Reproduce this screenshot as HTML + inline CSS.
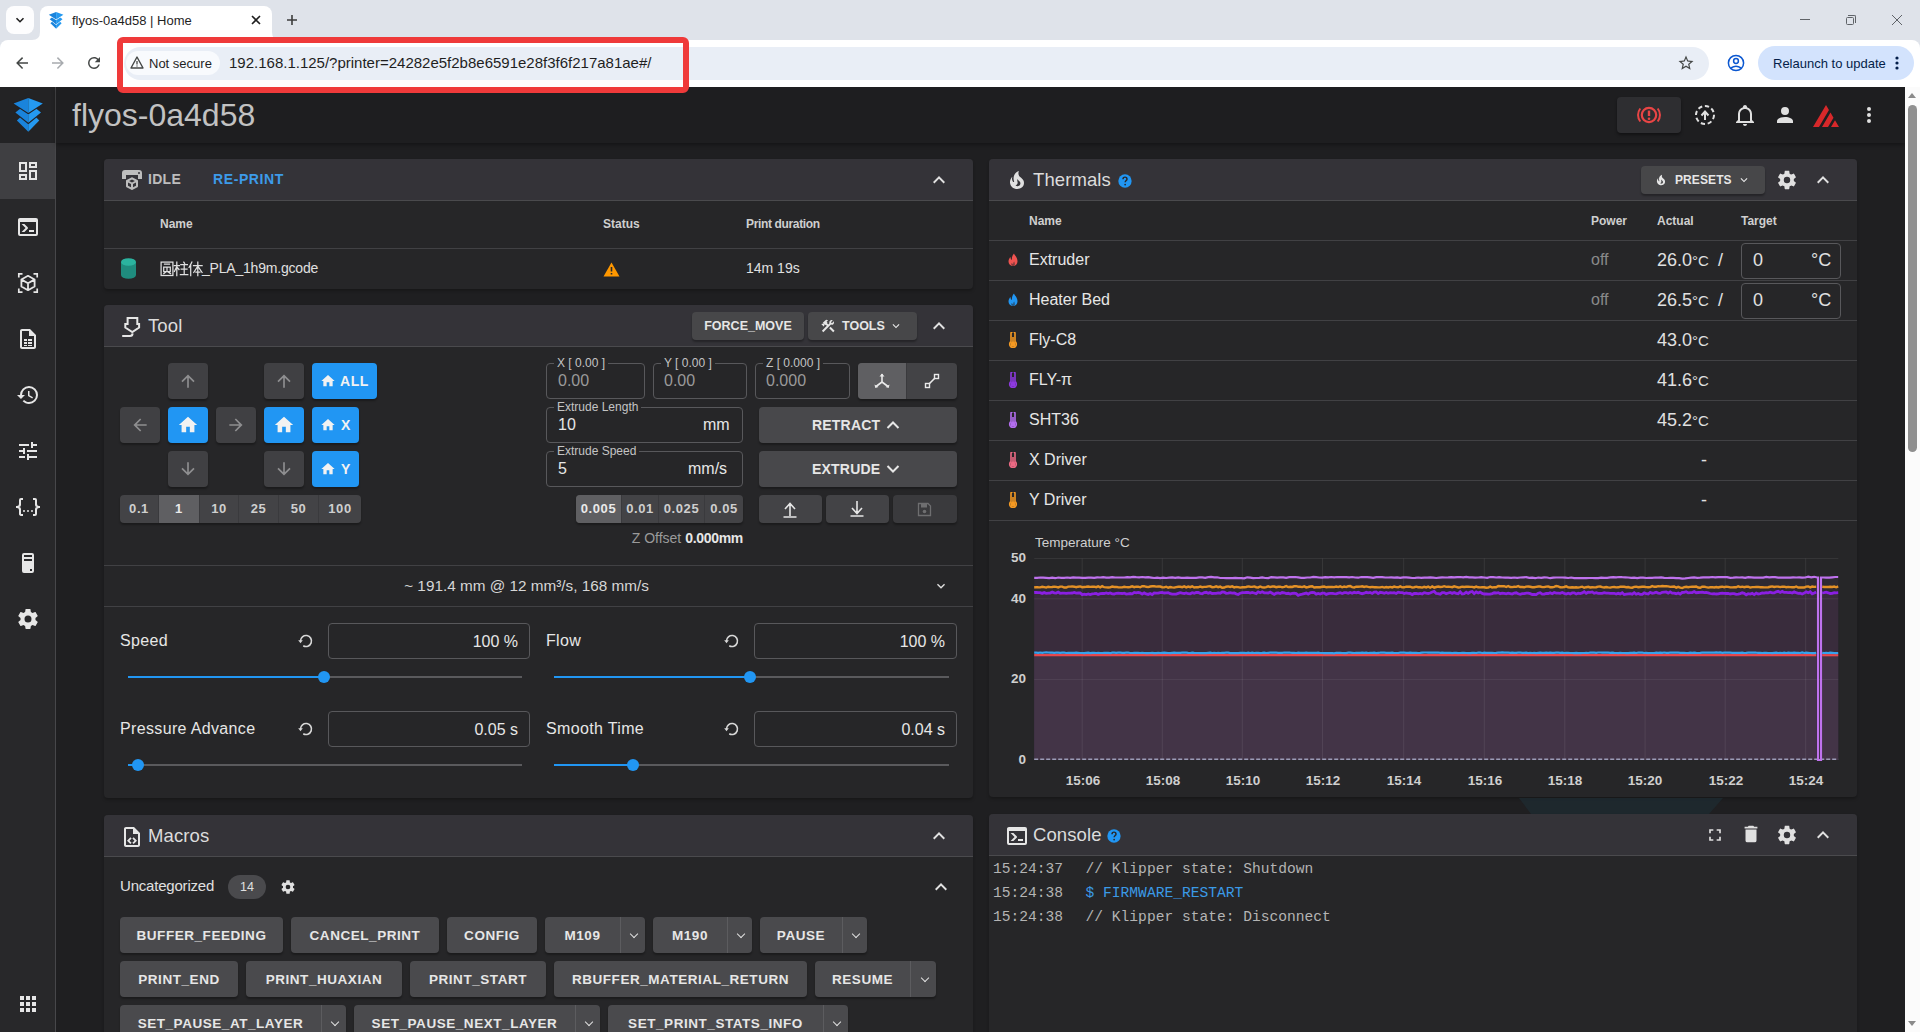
<!DOCTYPE html>
<html><head><meta charset="utf-8">
<style>
*{box-sizing:border-box;margin:0;padding:0}
html,body{width:1920px;height:1032px;overflow:hidden;background:#dfe3ea;font-family:"Liberation Sans",sans-serif}
.a{position:absolute}
svg{display:block}
/* chrome */
#tabbar{left:0;top:0;width:1920px;height:40px;background:#dfe3ea}
#toolbar{left:0;top:40px;width:1920px;height:47px;background:#fff;border-radius:8px 8px 0 0}
.ctext{color:#1f1f1f;white-space:nowrap}
/* app */
#app{left:0;top:87px;width:1905px;height:945px;background:#1f1f21;overflow:hidden}
#sidebar{left:0;top:0;width:56px;height:945px;background:#28282a;border-right:1px solid #47474a}
#appbar{left:56px;top:0;width:1849px;height:56px;background:#1e1e20;box-shadow:0 2px 4px rgba(0,0,0,.35)}
.panel{position:absolute;background:#262628;border-radius:4px;overflow:hidden;box-shadow:0 2px 3px rgba(0,0,0,.25)}
.ph{position:absolute;left:0;top:0;right:0;height:42px;background:#343338;border-bottom:1px solid #4a4a4d}
.t{position:absolute;white-space:nowrap;color:#e0e0e0}
.btn{position:absolute;background:#434346;border-radius:4px;color:#e6e6e6;font-weight:bold;font-size:14px;letter-spacing:1.1px;text-align:center;box-shadow:0 2px 2px rgba(0,0,0,.3)}
.fld{position:absolute;border:1px solid #58585b;border-radius:4px}
.mv{width:40px;height:36px;background:#404043}
.blue{background:#2196f3 !important}
.seg{position:absolute;height:28px;border-radius:4px;overflow:hidden;background:#434346;display:flex;box-shadow:0 2px 2px rgba(0,0,0,.3)}
.seg span{display:block;height:28px;line-height:28px;text-align:center;font-size:13px;font-weight:bold;color:#cfcfcf;letter-spacing:0.6px;border-right:1px solid #3a3a3d}
.seg span:last-child{border-right:none}
.seg span.on{background:#5f5f62;color:#eaeaea}
.lbl{position:absolute;white-space:nowrap;font-size:12px;margin-left:-2px;line-height:12px;color:#c4c4c4;background:#262628;padding:0 3px}
.fv{font-size:16px;line-height:20px}
.sl{font-size:16px;line-height:20px;color:#e6e6e6;letter-spacing:0.35px;margin-top:1px}
.inp span{position:absolute;right:11px;top:8px;font-size:16px;line-height:20px;color:#e6e6e6;white-space:nowrap}
.trk{position:absolute;height:2px;background:#5a5a5d}
.trk i{display:block;height:2px;background:#2196f3}
.thumb{position:absolute;width:12px;height:12px;border-radius:6px;background:#2196f3}
.mb{position:absolute;height:36px;line-height:37px;background:#4a4a4d;border-radius:4px;color:#e6e6e6;font-weight:bold;font-size:13.5px;letter-spacing:0.55px;text-align:center;white-space:nowrap;box-shadow:0 2px 2px rgba(0,0,0,.3)}
.mb.sp{text-align:left}
.mb.sp span{display:inline-block;text-align:center;border-right:1px solid #5c5c5f;height:36px}
.mb.sp::after{content:"";position:absolute;right:8px;top:14px;width:5px;height:5px;border-right:1.6px solid #e0e0e0;border-bottom:1.6px solid #e0e0e0;transform:rotate(45deg)}
.th{font-size:12px;line-height:14px;font-weight:bold;color:#cfcfcf}
.hl{position:absolute;left:0;width:868px;height:1px;background:#414144}
.tn{font-size:16px;line-height:20px;color:#e6e6e6}
.tp{font-size:16px;line-height:20px;color:#8a8a8a}
.ta{font-size:18px;line-height:20px;color:#e0e0e0}
.ta small{font-size:15px}
.yl{left:0;width:37px;text-align:right;font-size:13.5px;line-height:16px;color:#cfcfcf;font-weight:bold}
.xl{top:614px;width:48px;text-align:center;font-size:13.5px;line-height:16px;color:#cfcfcf;font-weight:bold}
.cl{left:4px;margin-top:1px;font-family:"Liberation Mono",monospace;font-size:14.6px;line-height:20px;color:#b4b4b4;white-space:pre}
#sb{left:1905px;top:87px;width:15px;height:945px;background:#fbfbfb}
</style></head>
<body>
<!-- ============ CHROME ============ -->
<div id="tabbar" class="a"></div>
<div class="a" style="left:6px;top:6px;width:28px;height:28px;border-radius:8px;background:#fdfdfe"></div>
<svg class="a" style="left:14px;top:14px" width="12" height="12" viewBox="0 0 12 12"><path d="M2.5 4.2 L6 7.7 L9.5 4.2" fill="none" stroke="#1f1f1f" stroke-width="1.6"/></svg>
<!-- active tab -->
<div class="a" style="left:40px;top:6px;width:232px;height:35px;background:#fff;border-radius:8px 8px 0 0"></div>
<svg class="a" style="left:32px;top:32px" width="8" height="8"><path d="M0 8 Q8 8 8 0 L8 8Z" fill="#fff"/></svg>
<svg class="a" style="left:272px;top:32px" width="8" height="8"><path d="M0 0 Q0 8 8 8 L0 8Z" fill="#fff"/></svg>
<svg class="a" style="left:46px;top:9px" width="20" height="23" viewBox="0 0 40 46"><path d="M20.3 17.5 L20.3 39.7 L8.9 28.6Z" fill="#1a84dc"/><path d="M20.3 17.5 L31.25 28.6 L20.3 39.7Z" fill="#2499f0"/><path d="M20.3 10.2 L33 20.5 L20.3 30.8 L7.4 20.5Z" fill="#fff" stroke="#fff" stroke-width="2.2" stroke-linejoin="round"/><path d="M20.3 10.2 L20.3 30.8 L7.4 20.5Z" fill="#1a84dc"/><path d="M20.3 10.2 L33 20.5 L20.3 30.8Z" fill="#2499f0"/><path d="M20.3 6 L34.8 11.4 L20.3 21 L5.6 11.4Z" fill="#fff" stroke="#fff" stroke-width="2.2" stroke-linejoin="round"/><path d="M20.3 6 L20.3 21 L5.6 11.4Z" fill="#1a84dc"/><path d="M20.3 6 L34.8 11.4 L20.3 21Z" fill="#2499f0"/></svg>
<div class="a ctext" style="left:72px;top:13px;font-size:13px;line-height:16px">flyos-0a4d58 | Home</div>
<svg class="a" style="left:251px;top:15px" width="10" height="10"><path d="M1 1L9 9M9 1L1 9" stroke="#1f1f1f" stroke-width="1.6"/></svg>
<svg class="a" style="left:286px;top:14px" width="12" height="12"><path d="M6 1V11M1 6H11" stroke="#3c3c3c" stroke-width="1.6"/></svg>
<!-- window controls -->
<div class="a" style="left:1800px;top:19px;width:10px;height:1px;background:#5f6368"></div>
<div class="a" style="left:1846px;top:17px;width:8px;height:8px;border:1px solid #5f6368;border-radius:1.5px"></div>
<div class="a" style="left:1848px;top:15px;width:8px;height:8px;border-top:1px solid #5f6368;border-right:1px solid #5f6368;border-radius:0 2px 0 0"></div>
<svg class="a" style="left:1891px;top:14px" width="12" height="12"><path d="M1 1L11 11M11 1L1 11" stroke="#5f6368" stroke-width="1"/></svg>

<div id="toolbar" class="a"></div>
<svg class="a" style="left:13px;top:54px" width="18" height="18" viewBox="0 0 24 24"><path d="M20,11V13H8L13.5,18.5L12.08,19.92L4.16,12L12.08,4.08L13.5,5.5L8,11H20Z" fill="#444746"/></svg>
<svg class="a" style="left:49px;top:54px" width="18" height="18" viewBox="0 0 24 24"><path d="M4,11V13H16L10.5,18.5L11.92,19.92L19.84,12L11.92,4.08L10.5,5.5L16,11H4Z" fill="#a8abaf"/></svg>
<svg class="a" style="left:85px;top:54px" width="18" height="18" viewBox="0 0 24 24"><path d="M17.65,6.35C16.2,4.9 14.21,4 12,4A8,8 0 0,0 4,12A8,8 0 0,0 12,20C15.73,20 18.84,17.45 19.73,14H17.65C16.83,16.33 14.61,18 12,18A6,6 0 0,1 6,12A6,6 0 0,1 12,6C13.66,6 15.14,6.69 16.22,7.78L13,11H20V4L17.65,6.35Z" fill="#444746"/></svg>
<div class="a" style="left:124px;top:47px;width:1585px;height:33px;border-radius:17px;background:#e9eef6"></div>
<div class="a" style="left:126px;top:51px;width:94px;height:24px;border-radius:12px;background:#f8fafd"></div>
<svg class="a" style="left:130px;top:56px" width="14" height="13" viewBox="0 0 14 13"><path d="M7 1 L13 12 L1 12Z" fill="none" stroke="#444746" stroke-width="1.4" stroke-linejoin="round"/><path d="M7 5V8.5M7 9.6V10.6" stroke="#444746" stroke-width="1.3"/></svg>
<div class="a ctext" style="left:149px;top:56px;font-size:13px;line-height:16px">Not secure</div>
<div class="a ctext" style="left:229px;top:54px;font-size:15px;line-height:18px">192.168.1.125/?printer=24282e5f2b8e6591e28f3f6f217a81ae#/</div>
<svg class="a" style="left:1677px;top:54px" width="18" height="18" viewBox="0 0 24 24"><path d="M12,15.39L8.24,17.66L9.23,13.38L5.91,10.5L10.29,10.13L12,6.09L13.71,10.13L18.09,10.5L14.77,13.38L15.76,17.66M22,9.24L14.81,8.63L12,2L9.19,8.63L2,9.24L7.45,13.97L5.82,21L12,17.27L18.18,21L16.54,13.97L22,9.24Z" fill="#444746"/></svg>
<svg class="a" style="left:1727px;top:54px" width="18" height="18" viewBox="0 0 18 18"><circle cx="9" cy="9" r="7.6" fill="none" stroke="#0b57d0" stroke-width="1.5"/><circle cx="9" cy="7" r="2.4" fill="none" stroke="#0b57d0" stroke-width="1.5"/><path d="M4 13.8 Q9 10.5 14 13.8" fill="none" stroke="#0b57d0" stroke-width="1.5"/></svg>
<div class="a" style="left:1758px;top:46px;width:156px;height:34px;border-radius:17px;background:#d3e3fd"></div>
<div class="a ctext" style="left:1773px;top:56px;font-size:13px;line-height:16px;color:#041e49">Relaunch to update</div>
<svg class="a" style="left:1893px;top:55px" width="8" height="16"><circle cx="4" cy="3" r="1.6" fill="#041e49"/><circle cx="4" cy="8" r="1.6" fill="#041e49"/><circle cx="4" cy="13" r="1.6" fill="#041e49"/></svg>

<!-- ============ APP ============ -->
<div id="app" class="a">
  <div id="sidebar" class="a"></div>
  <div class="a" style="left:0;top:0;width:55px;height:56px;background:#232325"></div>
  <div class="a" style="left:0;top:56px;width:55px;height:56px;background:#3f3f42"></div>
  <!-- logo --><svg class="a" style="left:8px;top:5px" width="40" height="46" viewBox="0 0 40 46"><path d="M20.3 17.5 L20.3 39.7 L8.9 28.6Z" fill="#1a84dc"/><path d="M20.3 17.5 L31.25 28.6 L20.3 39.7Z" fill="#2499f0"/><path d="M20.3 10.2 L33 20.5 L20.3 30.8 L7.4 20.5Z" fill="#222225" stroke="#222225" stroke-width="2.2" stroke-linejoin="round"/><path d="M20.3 10.2 L20.3 30.8 L7.4 20.5Z" fill="#1a84dc"/><path d="M20.3 10.2 L33 20.5 L20.3 30.8Z" fill="#2499f0"/><path d="M20.3 6 L34.8 11.4 L20.3 21 L5.6 11.4Z" fill="#222225" stroke="#222225" stroke-width="2.2" stroke-linejoin="round"/><path d="M20.3 6 L20.3 21 L5.6 11.4Z" fill="#1a84dc"/><path d="M20.3 6 L34.8 11.4 L20.3 21Z" fill="#2499f0"/></svg>
  <!-- sidebar icons -->
  <svg class="a" style="left:16px;top:72px" width="24" height="24" viewBox="0 0 24 24"><path d="M19,5V7H15V5H19M9,5V11H5V5H9M19,13V19H15V13H19M9,17V19H5V17H9M21,3H13V9H21V3M11,3H3V13H11V3M21,11H13V21H21V11M11,15H3V21H11V15Z" fill="#e6e6e6"/></svg>
  <svg class="a" style="left:16px;top:128px" width="24" height="24" viewBox="0 0 24 24"><path d="M20,19V7H4V19H20M20,3A2,2 0 0,1 22,5V19A2,2 0 0,1 20,21H4A2,2 0 0,1 2,19V5C2,3.89 2.9,3 4,3H20M13,17V15H18V17H13M9.58,13L5.57,9H8.4L11.7,12.3C12.09,12.69 12.09,13.33 11.7,13.72L8.42,17H5.59L9.58,13Z" fill="#e6e6e6"/></svg>
  <svg class="a" style="left:16px;top:184px" width="24" height="24" viewBox="0 0 24 24"><path d="M2.8 6.5V2.8H6.5M17.5 2.8H21.2V6.5M21.2 17.5V21.2H17.5M6.5 21.2H2.8V17.5" fill="none" stroke="#e6e6e6" stroke-width="1.7"/><path d="M12 4.8L18.6 8.5V15.5L12 19.2L5.4 15.5V8.5Z M5.6 8.6L12 12.2L18.4 8.6 M12 12.2V19" fill="none" stroke="#e6e6e6" stroke-width="1.8" stroke-linejoin="round"/></svg>
  <svg class="a" style="left:16px;top:240px" width="24" height="24" viewBox="0 0 24 24"><path d="M14 2H6C4.9 2 4 2.9 4 4V20C4 21.1 4.9 22 6 22H18C19.1 22 20 21.1 20 20V8L14 2M18 20H6V4H13V9H18V20M8 12H11V14H8V12M12 12H16V14H12V12M8 15H11V17H8V15M12 15H16V17H12V15M8 18H11V19H8V18M12 18H16V19H12V18Z" fill="#e6e6e6"/></svg>
  <svg class="a" style="left:16px;top:296px" width="24" height="24" viewBox="0 0 24 24"><path d="M13.5,8H12V13L16.28,15.54L17,14.33L13.5,12.25V8M13,3A9,9 0 0,0 4,12H1L4.96,16.03L9,12H6A7,7 0 0,1 13,5A7,7 0 0,1 20,12A7,7 0 0,1 13,19C11.07,19 9.32,18.21 8.06,16.94L6.64,18.36C8.27,20 10.5,21 13,21A9,9 0 0,0 22,12A9,9 0 0,0 13,3" fill="#e6e6e6"/></svg>
  <svg class="a" style="left:16px;top:352px" width="24" height="24" viewBox="0 0 24 24"><path d="M3,17V19H9V17H3M3,5V7H13V5H3M13,21V19H21V17H13V15H11V21H13M7,9V11H3V13H7V15H9V9H7M21,13V11H11V13H21M15,9H17V7H21V5H17V3H15V9Z" fill="#e6e6e6"/></svg>
  <svg class="a" style="left:16px;top:408px" width="24" height="24" viewBox="0 0 24 24"><path d="M5,3H7V5H5V10A2,2 0 0,1 3,12A2,2 0 0,1 5,14V19H7V21H5C3.93,20.73 3,20.1 3,19V15A2,2 0 0,0 1,13H0V11H1A2,2 0 0,0 3,9V5A2,2 0 0,1 5,3M19,3A2,2 0 0,1 21,5V9A2,2 0 0,0 23,11H24V13H23A2,2 0 0,0 21,15V19A2,2 0 0,1 19,21H17V19H19V14A2,2 0 0,1 21,12A2,2 0 0,1 19,10V5H17V3H19M12,15A1,1 0 0,1 13,16A1,1 0 0,1 12,17A1,1 0 0,1 11,16A1,1 0 0,1 12,15M8,15A1,1 0 0,1 9,16A1,1 0 0,1 8,17A1,1 0 0,1 7,16A1,1 0 0,1 8,15M16,15A1,1 0 0,1 17,16A1,1 0 0,1 16,17A1,1 0 0,1 15,16A1,1 0 0,1 16,15Z" fill="#e6e6e6"/></svg>
  <svg class="a" style="left:16px;top:464px" width="24" height="24" viewBox="0 0 24 24"><path d="M8,2H16A2,2 0 0,1 18,4V20A2,2 0 0,1 16,22H8A2,2 0 0,1 6,20V4A2,2 0 0,1 8,2M8,4V6H16V4H8M16,8H8V10H16V8M16,18H14V20H16V18Z" fill="#e6e6e6"/></svg>
  <svg class="a" style="left:16px;top:520px" width="24" height="24" viewBox="0 0 24 24"><path d="M12,15.5A3.5,3.5 0 0,1 8.5,12A3.5,3.5 0 0,1 12,8.5A3.5,3.5 0 0,1 15.5,12A3.5,3.5 0 0,1 12,15.5M19.43,12.97C19.47,12.65 19.5,12.33 19.5,12C19.5,11.67 19.47,11.34 19.43,11L21.54,9.37C21.73,9.22 21.78,8.95 21.66,8.73L19.66,5.27C19.54,5.05 19.27,4.96 19.05,5.05L16.56,6.05C16.04,5.66 15.5,5.32 14.87,5.07L14.5,2.42C14.46,2.18 14.25,2 14,2H10C9.75,2 9.54,2.18 9.5,2.42L9.13,5.07C8.5,5.32 7.96,5.66 7.44,6.05L4.95,5.05C4.73,4.96 4.46,5.05 4.34,5.27L2.34,8.73C2.21,8.95 2.27,9.22 2.46,9.37L4.57,11C4.53,11.34 4.5,11.67 4.5,12C4.5,12.33 4.53,12.65 4.57,12.97L2.46,14.63C2.27,14.78 2.21,15.05 2.34,15.27L4.34,18.73C4.46,18.95 4.73,19.03 4.95,18.95L7.44,17.94C7.96,18.34 8.5,18.68 9.13,18.93L9.5,21.58C9.54,21.82 9.75,22 10,22H14C14.25,22 14.46,21.82 14.5,21.58L14.87,18.93C15.5,18.67 16.04,18.34 16.56,17.94L19.05,18.95C19.27,19.03 19.54,18.95 19.66,18.73L21.66,15.27C21.78,15.05 21.73,14.78 21.54,14.63L19.43,12.97Z" fill="#e6e6e6"/></svg>
  <svg class="a" style="left:19px;top:908px" width="18" height="18" viewBox="0 0 18 18"><g fill="#e6e6e6"><rect x="1" y="1" width="4" height="4"/><rect x="7" y="1" width="4" height="4"/><rect x="13" y="1" width="4" height="4"/><rect x="1" y="7" width="4" height="4"/><rect x="7" y="7" width="4" height="4"/><rect x="13" y="7" width="4" height="4"/><rect x="1" y="13" width="4" height="4"/><rect x="7" y="13" width="4" height="4"/><rect x="13" y="13" width="4" height="4"/></g></svg>

  <div id="appbar" class="a"></div>
  <div class="t" style="left:72px;top:11px;font-size:32px;line-height:34px;color:#c2c2c2;letter-spacing:0px">flyos-0a4d58</div>
  <!-- appbar right -->
  <div class="a" style="left:1617px;top:10px;width:64px;height:36px;border-radius:4px;background:#2e2e31;box-shadow:0 2px 3px rgba(0,0,0,.4)"></div>
  <svg class="a" style="left:1636px;top:15px" width="26" height="26" viewBox="0 0 26 26"><circle cx="13" cy="13" r="7.2" fill="none" stroke="#e84545" stroke-width="2.2"/><path d="M13 8.6V14" stroke="#e84545" stroke-width="2.4"/><circle cx="13" cy="16.8" r="1.3" fill="#e84545"/><path d="M4.3 6.5 A10.5 10.5 0 0 0 4.3 19.5 M21.7 6.5 A10.5 10.5 0 0 1 21.7 19.5" fill="none" stroke="#e84545" stroke-width="2"/></svg>
  <svg class="a" style="left:1693px;top:16px" width="24" height="24" viewBox="0 0 24 24"><circle cx="12" cy="12" r="9" fill="none" stroke="#e0e0e0" stroke-width="2" stroke-dasharray="4.3 2.7"/><path d="M12 17V9.5M8.5 12.5L12 8.5L15.5 12.5" fill="none" stroke="#e0e0e0" stroke-width="2"/></svg>
  <svg class="a" style="left:1733px;top:16px" width="24" height="24" viewBox="0 0 24 24"><path d="M10 21H14C14 22.1 13.1 23 12 23S10 22.1 10 21M21 19V20H3V19L5 17V11C5 7.9 7 5.2 10 4.3V4C10 2.9 10.9 2 12 2S14 2.9 14 4V4.3C17 5.2 19 7.9 19 11V17L21 19M17 11C17 8.2 14.8 6 12 6S7 8.2 7 11V18H17V11Z" fill="#e0e0e0"/></svg>
  <svg class="a" style="left:1773px;top:16px" width="24" height="24" viewBox="0 0 24 24"><path d="M12,4A4,4 0 0,1 16,8A4,4 0 0,1 12,12A4,4 0 0,1 8,8A4,4 0 0,1 12,4M12,14C16.42,14 20,15.79 20,18V20H4V18C4,15.79 7.58,14 12,14Z" fill="#e0e0e0"/></svg>
  <svg class="a" style="left:1813px;top:18px" width="26" height="23" viewBox="0 0 26 23"><path d="M13 0L0 22H6L15.95 5.1Z M17.5 7.6L9 22H15L20.5 12.7Z M22 15.2L18 22H26Z" fill="#d7282a"/></svg>
  <svg class="a" style="left:1857px;top:16px" width="24" height="24" viewBox="0 0 24 24"><path d="M12,16A2,2 0 0,1 14,18A2,2 0 0,1 12,20A2,2 0 0,1 10,18A2,2 0 0,1 12,16M12,10A2,2 0 0,1 14,12A2,2 0 0,1 12,14A2,2 0 0,1 10,12A2,2 0 0,1 12,10M12,4A2,2 0 0,1 14,6A2,2 0 0,1 12,8A2,2 0 0,1 10,6A2,2 0 0,1 12,4Z" fill="#e0e0e0"/></svg>
    <!-- P1 status -->
  <div class="panel" style="left:104px;top:72px;width:869px;height:130px">
    <div class="ph"></div>
    <svg class="a" style="left:16px;top:9px" width="24" height="24" viewBox="0 0 24 24"><path d="M19,6A1,1 0 0,0 20,5A1,1 0 0,0 19,4A1,1 0 0,0 18,5A1,1 0 0,0 19,6M19,2A3,3 0 0,1 22,5V11H18V7H6V11H2V5A3,3 0 0,1 5,2H19M18,18.25C18,18.630 17.79,18.96 17.47,19.13L12.57,21.82C12.4,21.94 12.21,22 12,22C11.79,22 11.59,21.94 11.43,21.82L6.53,19.13C6.21,18.96 6,18.63 6,18.25V13C6,12.62 6.21,12.29 6.53,12.12L11.43,9.43C11.59,9.31 11.79,9.25 12,9.25C12.21,9.25 12.4,9.31 12.57,9.43L17.47,12.12C17.79,12.29 18,12.62 18,13V18.25M12,11.4L9.06,13L12,14.6L14.94,13L12,11.4M8,17.66L11,19.29V16.07L8,14.43V17.66M16,17.66V14.43L13,16.07V19.29L16,17.66Z" fill="#bdbdbd"/></svg>
    <div class="t" style="left:44px;top:12px;font-size:14px;line-height:16px;font-weight:bold;color:#bdbdbd;letter-spacing:0.3px">IDLE</div>
    <div class="t" style="left:109px;top:12px;font-size:14px;line-height:16px;font-weight:bold;color:#3d9be9;letter-spacing:0.6px">RE-PRINT</div>
    <svg class="a ic" style="left:823px;top:9px" width="24" height="24" viewBox="0 0 24 24"><path d="M7.41,15.41L12,10.83L16.59,15.41L18,14L12,8L6,14L7.41,15.41Z" fill="#e0e0e0"/></svg>
    <div class="t" style="left:56px;top:58px;font-size:12px;line-height:14px;font-weight:bold;color:#cfcfcf">Name</div>
    <div class="t" style="left:499px;top:58px;font-size:12px;line-height:14px;font-weight:bold;color:#cfcfcf">Status</div>
    <div class="t" style="left:642px;top:58px;font-size:12px;line-height:14px;font-weight:bold;color:#cfcfcf;letter-spacing:-0.35px">Print duration</div>
    <div class="a" style="left:0;top:89px;width:869px;height:1px;background:#414144"></div>
    <svg class="a" style="left:17px;top:99px" width="15" height="21" viewBox="0 0 15 21"><path d="M0 4V17A7.5 3.8 0 0 0 15 17V4Z" fill="#1f8c7e"/><ellipse cx="7.5" cy="4" rx="7.5" ry="3.8" fill="#2bb39f"/></svg>
    <svg class="a" style="left:56px;top:102px" width="44" height="16" viewBox="0 0 44 16"><g fill="none" stroke="#e0e0e0" stroke-width="1.25" stroke-linecap="square"><g transform="translate(0.5 0.5)"><rect x="0.6" y="0.6" width="11.8" height="13.4"/><path d="M4 2.6H9M3.2 5.6H9.8V10H3.2ZM6.5 5.6V10M5.2 10.6L3.2 12.2M7.8 10.6L10 12.2"/></g><g transform="translate(14.2 0.5)"><path d="M0 4.2H5.2M2.6 0.5V14M2.6 5L0.2 10M2.8 5.6L4.8 8M9.6 0.6L10.4 1.8M6.6 3.2H13.2M7 7.6H12.8M6.2 13.2H13.6M10 3.2V13.2"/></g><g transform="translate(28.5 0.5)"><path d="M3.4 0.5L0.6 6M2.2 3.6V14M5 4.2H13.6M9.3 0.5V14M9.3 4.6L5.2 11M9.3 4.6L13.6 11M7.4 10.6H11.4"/></g></g></svg><div class="t" style="left:98px;top:101px;font-size:14px;line-height:16px;color:#e0e0e0;letter-spacing:-0.2px">_PLA_1h9m.gcode</div>
    <svg class="a" style="left:499px;top:103px" width="17" height="15" viewBox="0 0 17 15"><path d="M8.5 0.5L16.5 14.5H0.5Z" fill="#ff9800"/><path d="M8.5 5V9.5M8.5 11V12.5" stroke="#28282b" stroke-width="1.6"/></svg>
    <div class="t" style="left:642px;top:101px;font-size:14px;line-height:16px;color:#e0e0e0">14m 19s</div>
  </div>
  <!-- P2 tool -->
  <div class="panel" style="left:104px;top:218px;width:869px;height:493px">
    <div class="ph"></div>
    <svg class="a" style="left:17px;top:11px" width="22" height="22" viewBox="0 0 22 22"><path d="M6.6 2H16.3V8H18.1V11.5L11.3 16L4.3 11.5V8H6.6Z" fill="none" stroke="#e6e6e6" stroke-width="2" stroke-linejoin="miter"/><path d="M1.2 20H9Q11.5 20 11.6 17.4" fill="none" stroke="#e6e6e6" stroke-width="2"/></svg>
    <div class="t" style="left:44px;top:10px;font-size:18.5px;line-height:22px;color:#dcdcdc;letter-spacing:0.1px">Tool</div>
    <div class="btn" style="left:588px;top:7px;width:112px;height:28px;line-height:28px;font-size:12.5px;letter-spacing:0px;background:#474749">FORCE_MOVE</div>
    <div class="btn" style="left:704px;top:7px;width:109px;height:28px;line-height:28px;font-size:12.5px;letter-spacing:0px;background:#474749;text-align:left;padding-left:34px">TOOLS</div>
    <svg class="a" style="left:716px;top:13px" width="16" height="16" viewBox="0 0 24 24"><path d="M13.78 15.3L19.78 21.3L21.89 19.14L15.89 13.14L13.78 15.3M17.5 10.1C17.11 10.1 16.69 10.05 16.36 9.91L4.97 21.25L2.86 19.14L10.27 11.74L8.5 9.96L7.78 10.66L6.33 9.25V12.11L5.63 12.81L2.11 9.25L2.81 8.55H5.62L4.22 7.14L7.78 3.58C8.95 2.41 10.83 2.41 12 3.58L9.89 5.74L11.3 7.14L10.59 7.85L12.38 9.63L14.2 7.75C14.06 7.42 14 7 14 6.63C14 4.66 15.56 3.11 17.5 3.11C18.09 3.11 18.61 3.25 19.08 3.53L16.41 6.2L17.91 7.7L20.58 5.03C20.86 5.5 21 6 21 6.63C21 8.55 19.45 10.1 17.5 10.1Z" fill="#e6e6e6"/></svg>
    <svg class="a" style="left:785px;top:14px" width="14" height="14" viewBox="0 0 24 24"><path d="M7.41,8.58L12,13.17L16.59,8.58L18,10L12,16L6,10L7.41,8.58Z" fill="#e6e6e6"/></svg>
    <svg class="a" style="left:823px;top:9px" width="24" height="24" viewBox="0 0 24 24"><path d="M7.41,15.41L12,10.83L16.59,15.41L18,14L12,8L6,14L7.41,15.41Z" fill="#e0e0e0"/></svg>

    <!-- jog grid -->
    <div class="btn mv" style="left:64px;top:58px"></div>
    <div class="btn mv" style="left:160px;top:58px"></div>
    <div class="btn mv" style="left:16px;top:102px"></div>
    <div class="btn mv blue" style="left:64px;top:102px"></div>
    <div class="btn mv" style="left:112px;top:102px"></div>
    <div class="btn mv blue" style="left:160px;top:102px"></div>
    <div class="btn mv" style="left:64px;top:146px"></div>
    <div class="btn mv" style="left:160px;top:146px"></div>
    <div class="btn blue" style="left:208px;top:58px;width:65px;height:36px"></div>
    <div class="btn blue" style="left:208px;top:102px;width:47px;height:36px"></div>
    <div class="btn blue" style="left:208px;top:146px;width:47px;height:36px"></div>
    <svg class="a" style="left:74px;top:66px" width="20" height="20" viewBox="0 0 24 24"><path d="M13,20H11V8L5.5,13.5L4.08,12.08L12,4.16L19.92,12.08L18.5,13.5L13,8V20Z" fill="#8e8e90"/></svg>
    <svg class="a" style="left:170px;top:66px" width="20" height="20" viewBox="0 0 24 24"><path d="M13,20H11V8L5.5,13.5L4.08,12.08L12,4.16L19.92,12.08L18.5,13.5L13,8V20Z" fill="#8e8e90"/></svg>
    <svg class="a" style="left:74px;top:154px" width="20" height="20" viewBox="0 0 24 24"><path d="M11,4H13V16L18.5,10.5L19.92,11.92L12,19.84L4.08,11.92L5.5,10.5L11,16V4Z" fill="#8e8e90"/></svg>
    <svg class="a" style="left:170px;top:154px" width="20" height="20" viewBox="0 0 24 24"><path d="M11,4H13V16L18.5,10.5L19.92,11.92L12,19.84L4.08,11.92L5.5,10.5L11,16V4Z" fill="#8e8e90"/></svg>
    <svg class="a" style="left:26px;top:110px" width="20" height="20" viewBox="0 0 24 24"><path d="M20,11V13H8L13.5,18.5L12.08,19.92L4.16,12L12.08,4.08L13.5,5.5L8,11H20Z" fill="#8e8e90"/></svg>
    <svg class="a" style="left:122px;top:110px" width="20" height="20" viewBox="0 0 24 24"><path d="M4,11V13H16L10.5,18.5L11.92,19.92L19.84,12L11.92,4.08L10.5,5.5L16,11H4Z" fill="#8e8e90"/></svg>
    <svg class="a" style="left:73px;top:109px" width="22" height="22" viewBox="0 0 24 24"><path d="M10,20V14H14V20H19V12H22L12,3L2,12H5V20H10Z" fill="#f2f2f2"/></svg>
    <svg class="a" style="left:169px;top:109px" width="22" height="22" viewBox="0 0 24 24"><path d="M10,20V14H14V20H19V12H22L12,3L2,12H5V20H10Z" fill="#f2f2f2"/></svg>
    <svg class="a" style="left:216px;top:68px" width="16" height="16" viewBox="0 0 24 24"><path d="M10,20V14H14V20H19V12H22L12,3L2,12H5V20H10Z" fill="#f2f2f2"/></svg>
    <div class="t" style="left:236px;top:68px;font-size:14px;line-height:16px;font-weight:bold;color:#f2f2f2;letter-spacing:0.6px">ALL</div>
    <svg class="a" style="left:216px;top:112px" width="16" height="16" viewBox="0 0 24 24"><path d="M10,20V14H14V20H19V12H22L12,3L2,12H5V20H10Z" fill="#f2f2f2"/></svg>
    <div class="t" style="left:237px;top:112px;font-size:14px;line-height:16px;font-weight:bold;color:#f2f2f2">X</div>
    <svg class="a" style="left:216px;top:156px" width="16" height="16" viewBox="0 0 24 24"><path d="M10,20V14H14V20H19V12H22L12,3L2,12H5V20H10Z" fill="#f2f2f2"/></svg>
    <div class="t" style="left:237px;top:156px;font-size:14px;line-height:16px;font-weight:bold;color:#f2f2f2">Y</div>
    <!-- step group -->
    <div class="seg" style="left:16px;top:190px;width:241px">
      <span style="width:39px">0.1</span><span class="on" style="width:41px">1</span><span style="width:39px">10</span><span style="width:40px">25</span><span style="width:40px">50</span><span style="width:42px">100</span>
    </div>

    <!-- position fields -->
    <div class="fld" style="left:442px;top:58px;width:99px;height:36px"></div>
    <div class="fld" style="left:549px;top:58px;width:94px;height:36px"></div>
    <div class="fld" style="left:651px;top:58px;width:95px;height:36px"></div>
    <div class="lbl" style="left:452px;top:52px">X [ 0.00 ]</div>
    <div class="lbl" style="left:559px;top:52px">Y [ 0.00 ]</div>
    <div class="lbl" style="left:661px;top:52px">Z [ 0.000 ]</div>
    <div class="t fv" style="left:454px;top:66px;color:#9a9a9a">0.00</div>
    <div class="t fv" style="left:560px;top:66px;color:#9a9a9a">0.00</div>
    <div class="t fv" style="left:662px;top:66px;color:#9a9a9a">0.000</div>
    <div class="seg" style="left:754px;top:58px;width:99px;height:36px">
      <span class="on" style="width:49px;height:36px"></span><span style="width:50px;height:36px"></span>
    </div>
    <svg class="a" style="left:768px;top:66px" width="20" height="20" viewBox="0 0 20 20"><path d="M10 3V11M10 11L4 15.5M10 11L16 15.5" stroke="#eaeaea" stroke-width="1.6"/><path d="M7.5 5.5L10 2.5L12.5 5.5Z M2.5 13.5L3.3 17L6.5 16Z M17.5 13.5L16.7 17L13.5 16Z" fill="#eaeaea"/></svg>
    <svg class="a" style="left:818px;top:66px" width="20" height="20" viewBox="0 0 20 20"><rect x="3.5" y="12.5" width="4" height="4" fill="none" stroke="#eaeaea" stroke-width="1.4"/><rect x="12.5" y="3.5" width="4" height="4" fill="none" stroke="#eaeaea" stroke-width="1.4"/><path d="M7 13L13 7" stroke="#eaeaea" stroke-width="1.6"/></svg>

    <div class="fld" style="left:442px;top:102px;width:197px;height:36px"></div>
    <div class="lbl" style="left:452px;top:96px;">Extrude Length</div>
    <div class="t fv" style="left:454px;top:110px;color:#e6e6e6">10</div>
    <div class="t fv" style="left:599px;top:110px;color:#e6e6e6">mm</div>
    <div class="fld" style="left:442px;top:146px;width:197px;height:36px"></div>
    <div class="lbl" style="left:452px;top:140px;">Extrude Speed</div>
    <div class="t fv" style="left:454px;top:154px;color:#e6e6e6">5</div>
    <div class="t fv" style="left:584px;top:154px;color:#e6e6e6">mm/s</div>

    <div class="btn" style="left:655px;top:102px;width:198px;height:36px;line-height:36px;text-align:left;padding-left:53px;letter-spacing:0.2px;background:#48484b">RETRACT</div>
    <svg class="a" style="left:781px;top:113px" width="16" height="14" viewBox="0 0 16 14"><path d="M2.5 10L8 4.5L13.5 10" fill="none" stroke="#e6e6e6" stroke-width="2"/></svg>
    <div class="btn" style="left:655px;top:146px;width:198px;height:36px;line-height:36px;text-align:left;padding-left:53px;letter-spacing:0.2px;background:#48484b">EXTRUDE</div>
    <svg class="a" style="left:781px;top:157px" width="16" height="14" viewBox="0 0 16 14"><path d="M2.5 4L8 9.5L13.5 4" fill="none" stroke="#e6e6e6" stroke-width="2"/></svg>

    <div class="seg" style="left:472px;top:190px;width:167px">
      <span class="on" style="width:46px">0.005</span><span style="width:37px">0.01</span><span style="width:46px">0.025</span><span style="width:38px">0.05</span>
    </div>
    <div class="btn" style="left:655px;top:190px;width:63px;height:28px"></div>
    <div class="btn" style="left:722px;top:190px;width:63px;height:28px"></div>
    <div class="btn" style="left:789px;top:190px;width:64px;height:28px;background:#3a3a3d"></div>
    <svg class="a" style="left:677px;top:196px" width="18" height="17" viewBox="0 0 18 17"><path d="M9 15V3M4 8L9 2.5L14 8M2.5 16H15.5" fill="none" stroke="#e6e6e6" stroke-width="1.6"/></svg>
    <svg class="a" style="left:744px;top:195px" width="18" height="17" viewBox="0 0 18 17"><path d="M9 1V13M4 8L9 13.5L14 8M2.5 16H15.5" fill="none" stroke="#e6e6e6" stroke-width="1.6"/></svg>
    <svg class="a" style="left:813px;top:197px" width="15" height="15" viewBox="0 0 15 15"><path d="M2 1.5H11L13.5 4V13.5H1.5V1.5Z" fill="none" stroke="#6e6e70" stroke-width="1.3"/><rect x="4" y="2" width="6" height="3.5" fill="#6e6e70"/><circle cx="7.5" cy="9.5" r="1.8" fill="#6e6e70"/></svg>
    <div class="t" style="left:524px;top:225px;font-size:14px;line-height:16px;color:#9a9a9a;text-align:right;width:115px"><span>Z Offset </span><b style="color:#e6e6e6;letter-spacing:-0.3px">0.000mm</b></div>

    <div class="a" style="left:0;top:260px;width:869px;height:1px;background:#414144"></div>
    <div class="t" style="left:0;top:272px;width:845px;text-align:center;font-size:15.3px;line-height:18px;color:#d6d6d6">~ 191.4 mm @ 12 mm³/s, 168 mm/s</div>
    <svg class="a" style="left:829px;top:273px" width="16" height="16" viewBox="0 0 24 24"><path d="M7.41,8.58L12,13.17L16.59,8.58L18,10L12,16L6,10L7.41,8.58Z" fill="#e0e0e0"/></svg>
    <div class="a" style="left:0;top:301px;width:869px;height:1px;background:#414144"></div>

    <!-- sliders -->
    <div class="t sl" style="left:16px;top:325px">Speed</div>
    <svg class="a rs" style="left:194px;top:328px" width="16" height="16" viewBox="0 0 16 16"><path d="M5.25 12.76A5.5 5.5 0 1 0 2.5 8" fill="none" stroke="#d8d8d8" stroke-width="1.6"/><path d="M0.2 7.3H4.8L2.5 10.3Z" fill="#d8d8d8"/></svg>
    <div class="fld inp" style="left:224px;top:318px;width:202px;height:36px"><span>100 %</span></div>
    <div class="trk" style="left:24px;top:371px;width:394px"><i style="width:196px"></i></div>
    <div class="thumb" style="left:214px;top:366px"></div>

    <div class="t sl" style="left:442px;top:325px">Flow</div>
    <svg class="a rs" style="left:620px;top:328px" width="16" height="16" viewBox="0 0 16 16"><path d="M5.25 12.76A5.5 5.5 0 1 0 2.5 8" fill="none" stroke="#d8d8d8" stroke-width="1.6"/><path d="M0.2 7.3H4.8L2.5 10.3Z" fill="#d8d8d8"/></svg>
    <div class="fld inp" style="left:650px;top:318px;width:203px;height:36px"><span>100 %</span></div>
    <div class="trk" style="left:450px;top:371px;width:395px"><i style="width:196px"></i></div>
    <div class="thumb" style="left:640px;top:366px"></div>

    <div class="t sl" style="left:16px;top:413px">Pressure Advance</div>
    <svg class="a rs" style="left:194px;top:416px" width="16" height="16" viewBox="0 0 16 16"><path d="M5.25 12.76A5.5 5.5 0 1 0 2.5 8" fill="none" stroke="#d8d8d8" stroke-width="1.6"/><path d="M0.2 7.3H4.8L2.5 10.3Z" fill="#d8d8d8"/></svg>
    <div class="fld inp" style="left:224px;top:406px;width:202px;height:36px"><span>0.05 s</span></div>
    <div class="trk" style="left:24px;top:459px;width:394px"><i style="width:10px"></i></div>
    <div class="thumb" style="left:28px;top:454px"></div>

    <div class="t sl" style="left:442px;top:413px">Smooth Time</div>
    <svg class="a rs" style="left:620px;top:416px" width="16" height="16" viewBox="0 0 16 16"><path d="M5.25 12.76A5.5 5.5 0 1 0 2.5 8" fill="none" stroke="#d8d8d8" stroke-width="1.6"/><path d="M0.2 7.3H4.8L2.5 10.3Z" fill="#d8d8d8"/></svg>
    <div class="fld inp" style="left:650px;top:406px;width:203px;height:36px"><span>0.04 s</span></div>
    <div class="trk" style="left:450px;top:459px;width:395px"><i style="width:79px"></i></div>
    <div class="thumb" style="left:523px;top:454px"></div>
  </div>
  <!-- P3 macros -->
  <div class="panel" style="left:104px;top:728px;width:869px;height:320px">
    <div class="ph"></div>
    <svg class="a" style="left:16px;top:10px" width="24" height="24" viewBox="0 0 24 24"><path d="M14 2H6C4.89 2 4 2.89 4 4V20C4 21.11 4.89 22 6 22H18C19.11 22 20 21.11 20 20V8L14 2M18 20H6V4H13V9H18V20M9.54 15.65L11.63 17.74L10.35 19L7 15.65L10.35 12.3L11.63 13.56L9.54 15.65M17 15.65L13.65 19L12.38 17.74L14.47 15.65L12.38 13.56L13.65 12.3L17 15.65Z" fill="#e6e6e6"/></svg>
    <div class="t" style="left:44px;top:10px;font-size:18.5px;line-height:22px;color:#dcdcdc;letter-spacing:0.1px">Macros</div>
    <svg class="a" style="left:823px;top:9px" width="24" height="24" viewBox="0 0 24 24"><path d="M7.41,15.41L12,10.83L16.59,15.41L18,14L12,8L6,14L7.41,15.41Z" fill="#e0e0e0"/></svg>
    <div class="t" style="left:16px;top:62px;font-size:15px;line-height:18px;color:#e0e0e0;letter-spacing:-0.2px">Uncategorized</div>
    <div class="a" style="left:124px;top:60px;width:38px;height:24px;border-radius:12px;background:#4a4a4d;color:#e0e0e0;font-size:12.5px;line-height:24px;text-align:center">14</div>
    <svg class="a" style="left:176px;top:64px" width="16" height="16" viewBox="0 0 24 24"><path d="M12,15.5A3.5,3.5 0 0,1 8.5,12A3.5,3.5 0 0,1 12,8.5A3.5,3.5 0 0,1 15.5,12A3.5,3.5 0 0,1 12,15.5M19.43,12.97C19.47,12.65 19.5,12.33 19.5,12C19.5,11.67 19.47,11.34 19.43,11L21.54,9.37C21.73,9.22 21.78,8.95 21.66,8.73L19.66,5.27C19.54,5.05 19.27,4.96 19.05,5.05L16.56,6.05C16.04,5.66 15.5,5.32 14.87,5.07L14.5,2.42C14.46,2.18 14.25,2 14,2H10C9.75,2 9.54,2.18 9.5,2.42L9.13,5.07C8.5,5.32 7.96,5.66 7.44,6.05L4.950,5.05C4.73,4.96 4.46,5.05 4.34,5.27L2.34,8.73C2.21,8.95 2.27,9.22 2.46,9.37L4.57,11C4.53,11.34 4.5,11.67 4.5,12C4.5,12.33 4.53,12.65 4.57,12.97L2.46,14.63C2.27,14.78 2.21,15.05 2.34,15.27L4.34,18.73C4.46,18.95 4.73,19.03 4.95,18.95L7.44,17.94C7.960,18.34 8.5,18.68 9.13,18.93L9.5,21.58C9.54,21.82 9.75,22 10,22H14C14.25,22 14.46,21.82 14.5,21.58L14.87,18.93C15.5,18.67 16.04,18.34 16.56,17.94L19.05,18.95C19.27,19.03 19.54,18.95 19.66,18.73L21.66,15.27C21.78,15.05 21.73,14.78 21.54,14.63L19.43,12.97Z" fill="#e0e0e0"/></svg>
    <svg class="a" style="left:825px;top:60px" width="24" height="24" viewBox="0 0 24 24"><path d="M7.41,15.41L12,10.83L16.59,15.41L18,14L12,8L6,14L7.41,15.41Z" fill="#e0e0e0"/></svg>
    <!-- macro buttons -->
    <div class="mb" style="left:16px;top:102px;width:163px">BUFFER_FEEDING</div>
    <div class="mb" style="left:187px;top:102px;width:148px">CANCEL_PRINT</div>
    <div class="mb" style="left:343px;top:102px;width:90px">CONFIG</div>
    <div class="mb sp" style="left:441px;top:102px;width:100px"><span style="width:76px">M109</span></div>
    <div class="mb sp" style="left:549px;top:102px;width:99px"><span style="width:75px">M190</span></div>
    <div class="mb sp" style="left:656px;top:102px;width:107px"><span style="width:83px">PAUSE</span></div>
    <div class="mb" style="left:16px;top:146px;width:118px">PRINT_END</div>
    <div class="mb" style="left:142px;top:146px;width:156px">PRINT_HUAXIAN</div>
    <div class="mb" style="left:306px;top:146px;width:136px">PRINT_START</div>
    <div class="mb" style="left:450px;top:146px;width:253px">RBUFFER_MATERIAL_RETURN</div>
    <div class="mb sp" style="left:711px;top:146px;width:121px"><span style="width:96px">RESUME</span></div>
    <div class="mb sp" style="left:16px;top:190px;width:226px"><span style="width:202px">SET_PAUSE_AT_LAYER</span></div>
    <div class="mb sp" style="left:250px;top:190px;width:246px"><span style="width:222px">SET_PAUSE_NEXT_LAYER</span></div>
    <div class="mb sp" style="left:504px;top:190px;width:240px"><span style="width:216px">SET_PRINT_STATS_INFO</span></div>
  </div>
  <!-- P4 thermals -->
  <div class="panel" style="left:989px;top:72px;width:868px;height:638px">
    <div class="ph"></div>
    <svg class="a" style="left:16px;top:9px" width="24" height="24" viewBox="0 0 24 24"><path d="M17.66 11.2C17.43 10.9 17.15 10.64 16.89 10.38C16.22 9.78 15.46 9.35 14.82 8.72C13.33 7.26 13 4.85 13.95 3C13 3.23 12.17 3.75 11.46 4.32C8.87 6.4 7.85 10.07 9.07 13.22C9.11 13.32 9.15 13.42 9.15 13.550C9.15 13.77 9 13.97 8.8 14.05C8.57 14.15 8.33 14.09 8.14 13.93C8.08 13.88 8.04 13.83 8 13.76C6.87 12.33 6.69 10.28 7.45 8.64C5.78 10 4.87 12.3 5 14.47C5.06 14.97 5.12 15.47 5.29 15.97C5.43 16.57 5.7 17.17 6 17.7C7.08 19.43 8.95 20.67 10.96 20.92C13.1 21.19 15.39 20.8 17.03 19.32C18.86 17.66 19.5 15 18.560 12.72L18.43 12.46C18.22 12 17.66 11.2 17.66 11.2M14.5 17.5C14.22 17.74 13.76 18 13.4 18.1C12.28 18.5 11.16 17.94 10.5 17.28C11.69 17 12.4 16.12 12.61 15.23C12.78 14.43 12.46 13.77 12.33 13C12.21 12.26 12.23 11.63 12.5 10.94C12.69 11.32 12.89 11.7 13.13 12C13.9 13 15.11 13.44 15.37 14.8C15.41 14.94 15.43 15.08 15.43 15.23C15.46 16.05 15.1 16.95 14.5 17.5H14.5Z" fill="#e0e0e0"/></svg>
    <div class="t" style="left:44px;top:10px;font-size:18.5px;line-height:22px;color:#dcdcdc;letter-spacing:0.1px">Thermals</div>
    <svg class="a" style="left:128px;top:14px" width="16" height="16" viewBox="0 0 24 24"><circle cx="12" cy="12" r="10" fill="#2196f3"/><path d="M9 9.2A3 3 0 0 1 15 9.2C15 11 12.2 11.5 12.2 13.8" fill="none" stroke="#28282b" stroke-width="2.2"/><circle cx="12.2" cy="17.3" r="1.3" fill="#28282b"/></svg>
    <div class="btn" style="left:652px;top:7px;width:124px;height:28px;line-height:28px;font-size:12px;letter-spacing:0.1px;text-align:left;padding-left:34px;background:#474749">PRESETS</div>
    <svg class="a" style="left:665px;top:14px" width="14" height="14" viewBox="0 0 24 24"><path d="M17.66 11.2C17.43 10.9 17.15 10.64 16.89 10.38C16.22 9.78 15.46 9.35 14.82 8.72C13.33 7.26 13 4.85 13.95 3C13 3.23 12.17 3.75 11.46 4.32C8.87 6.4 7.85 10.07 9.07 13.22C9.11 13.32 9.15 13.42 9.15 13.550C9.15 13.77 9 13.97 8.8 14.05C8.57 14.15 8.33 14.09 8.14 13.93C8.08 13.88 8.04 13.83 8 13.76C6.87 12.33 6.69 10.28 7.45 8.64C5.78 10 4.87 12.3 5 14.47C5.06 14.97 5.12 15.47 5.29 15.97C5.43 16.57 5.7 17.17 6 17.7C7.08 19.43 8.95 20.67 10.96 20.92C13.1 21.19 15.39 20.8 17.03 19.32C18.86 17.66 19.5 15 18.560 12.72L18.43 12.46C18.22 12 17.66 11.2 17.66 11.2M14.5 17.5C14.22 17.74 13.76 18 13.4 18.1C12.28 18.5 11.16 17.94 10.5 17.28C11.69 17 12.4 16.12 12.61 15.23C12.78 14.43 12.46 13.77 12.33 13C12.21 12.26 12.23 11.63 12.5 10.94C12.69 11.32 12.89 11.7 13.13 12C13.9 13 15.11 13.44 15.37 14.8C15.41 14.94 15.43 15.08 15.43 15.23C15.46 16.05 15.1 16.95 14.5 17.5H14.5Z" fill="#e6e6e6"/></svg>
    <svg class="a" style="left:748px;top:14px" width="14" height="14" viewBox="0 0 24 24"><path d="M7.41,8.58L12,13.17L16.59,8.58L18,10L12,16L6,10L7.41,8.58Z" fill="#e6e6e6"/></svg>
    <svg class="a" style="left:787px;top:10px" width="22" height="22" viewBox="0 0 24 24"><path d="M12,15.5A3.5,3.5 0 0,1 8.5,12A3.5,3.5 0 0,1 12,8.5A3.5,3.5 0 0,1 15.5,12A3.5,3.5 0 0,1 12,15.5M19.43,12.97C19.47,12.65 19.5,12.33 19.5,12C19.5,11.67 19.47,11.34 19.43,11L21.54,9.37C21.73,9.22 21.78,8.95 21.66,8.73L19.66,5.27C19.54,5.05 19.27,4.96 19.05,5.05L16.56,6.05C16.04,5.66 15.5,5.32 14.87,5.07L14.5,2.42C14.46,2.18 14.25,2 14,2H10C9.75,2 9.54,2.18 9.5,2.42L9.13,5.07C8.5,5.32 7.96,5.66 7.44,6.05L4.95,5.05C4.73,4.96 4.46,5.05 4.34,5.27L2.34,8.73C2.21,8.95 2.27,9.22 2.46,9.37L4.57,11C4.53,11.34 4.5,11.67 4.5,12C4.5,12.33 4.53,12.65 4.57,12.97L2.46,14.63C2.27,14.78 2.21,15.05 2.34,15.27L4.34,18.73C4.46,18.95 4.73,19.03 4.95,18.95L7.44,17.94C7.96,18.34 8.5,18.68 9.13,18.93L9.5,21.58C9.54,21.82 9.75,22 10,22H14C14.25,22 14.46,21.82 14.5,21.58L14.87,18.93C15.5,18.67 16.04,18.34 16.56,17.94L19.05,18.95C19.27,19.030 19.54,18.95 19.66,18.73L21.66,15.27C21.78,15.05 21.73,14.78 21.54,14.63L19.43,12.97Z" fill="#e0e0e0"/></svg>
    <svg class="a" style="left:822px;top:9px" width="24" height="24" viewBox="0 0 24 24"><path d="M7.41,15.41L12,10.83L16.59,15.41L18,14L12,8L6,14L7.41,15.41Z" fill="#e0e0e0"/></svg>
    <!-- table header -->
    <div class="t th" style="left:40px;top:55px">Name</div>
    <div class="t th" style="left:602px;top:55px">Power</div>
    <div class="t th" style="left:668px;top:55px">Actual</div>
    <div class="t th" style="left:752px;top:55px">Target</div>
    <div class="hl" style="top:81px"></div>
    <div class="hl" style="top:121px"></div>
    <div class="hl" style="top:161px"></div>
    <div class="hl" style="top:201px"></div>
    <div class="hl" style="top:241px"></div>
    <div class="hl" style="top:281px"></div>
    <div class="hl" style="top:321px"></div>
    <div class="hl" style="top:361px"></div>
    <!-- rows -->
    <svg class="a" style="left:18px;top:94px" width="12" height="14" viewBox="0 0 12 14"><path d="M7 0.5C7.5 2.5 10.5 4 10.5 8.5A4.5 4.5 0 0 1 1.5 8.5C1.5 6.5 2.5 5 3.5 4C3.5 5.5 4 6.5 5 7C4.5 4.5 5.5 2 7 0.5Z" fill="#ef5350"/><path d="M6 13A2 2 0 0 1 4.5 10C5 10.8 5.5 11 6.2 10.8C6.2 9.8 6.5 9 7.2 8.5C7.8 10 8 11 7.8 12A2 2 0 0 1 6 13Z" fill="#28282b" opacity=".55"/></svg>
    <div class="t tn" style="left:40px;top:91px">Extruder</div>
    <div class="t tp" style="left:602px;top:91px">off</div>
    <div class="t ta" style="left:668px;top:91px">26.0<small>°C</small></div>
    <div class="t ta" style="left:729px;top:91px">/</div>
    <div class="fld" style="left:752px;top:84px;width:100px;height:36px"></div>
    <div class="t ta" style="left:764px;top:91px">0</div>
    <div class="t ta" style="left:822px;top:91px">°C</div>
    <svg class="a" style="left:18px;top:134px" width="12" height="14" viewBox="0 0 12 14"><path d="M7 0.5C7.5 2.5 10.5 4 10.5 8.5A4.5 4.5 0 0 1 1.5 8.5C1.5 6.5 2.5 5 3.5 4C3.5 5.5 4 6.5 5 7C4.5 4.5 5.5 2 7 0.5Z" fill="#2196f3"/><path d="M6 13A2 2 0 0 1 4.5 10C5 10.8 5.5 11 6.2 10.8C6.2 9.8 6.5 9 7.2 8.5C7.8 10 8 11 7.8 12A2 2 0 0 1 6 13Z" fill="#28282b" opacity=".55"/></svg>
    <div class="t tn" style="left:40px;top:131px">Heater Bed</div>
    <div class="t tp" style="left:602px;top:131px">off</div>
    <div class="t ta" style="left:668px;top:131px">26.5<small>°C</small></div>
    <div class="t ta" style="left:729px;top:131px">/</div>
    <div class="fld" style="left:752px;top:124px;width:100px;height:36px"></div>
    <div class="t ta" style="left:764px;top:131px">0</div>
    <div class="t ta" style="left:822px;top:131px">°C</div>
    <svg class="a th1" style="left:19px;top:173px" width="10" height="16" viewBox="0 0 10 16"><path d="M3 1.5A2 2 0 0 1 7 1.5V9.5A3.3 3.3 0 1 1 3 9.5Z" fill="none" stroke="#f59a23" stroke-width="1.6"/><circle cx="5" cy="12" r="2.6" fill="#f59a23"/><rect x="4.2" y="5" width="1.6" height="6" fill="#f59a23"/></svg>
    <div class="t tn" style="left:40px;top:171px">Fly-C8</div>
    <div class="t ta" style="left:668px;top:171px">43.0<small>°C</small></div>
    <svg class="a th1" style="left:19px;top:213px" width="10" height="16" viewBox="0 0 10 16"><path d="M3 1.5A2 2 0 0 1 7 1.5V9.5A3.3 3.3 0 1 1 3 9.5Z" fill="none" stroke="#8e3ae0" stroke-width="1.6"/><circle cx="5" cy="12" r="2.6" fill="#8e3ae0"/><rect x="4.2" y="5" width="1.6" height="6" fill="#8e3ae0"/></svg>
    <div class="t tn" style="left:40px;top:211px">FLY-π</div>
    <div class="t ta" style="left:668px;top:211px">41.6<small>°C</small></div>
    <svg class="a th1" style="left:19px;top:253px" width="10" height="16" viewBox="0 0 10 16"><path d="M3 1.5A2 2 0 0 1 7 1.5V9.5A3.3 3.3 0 1 1 3 9.5Z" fill="none" stroke="#b46ef0" stroke-width="1.6"/><circle cx="5" cy="12" r="2.6" fill="#b46ef0"/><rect x="4.2" y="5" width="1.6" height="6" fill="#b46ef0"/></svg>
    <div class="t tn" style="left:40px;top:251px">SHT36</div>
    <div class="t ta" style="left:668px;top:251px">45.2<small>°C</small></div>
    <svg class="a th1" style="left:19px;top:293px" width="10" height="16" viewBox="0 0 10 16"><path d="M3 1.5A2 2 0 0 1 7 1.5V9.5A3.3 3.3 0 1 1 3 9.5Z" fill="none" stroke="#ec6a84" stroke-width="1.6"/><circle cx="5" cy="12" r="2.6" fill="#ec6a84"/><rect x="4.2" y="5" width="1.6" height="6" fill="#ec6a84"/></svg>
    <div class="t tn" style="left:40px;top:291px">X Driver</div>
    <div class="t ta" style="left:712px;top:291px">-</div>
    <svg class="a th1" style="left:19px;top:333px" width="10" height="16" viewBox="0 0 10 16"><path d="M3 1.5A2 2 0 0 1 7 1.5V9.5A3.3 3.3 0 1 1 3 9.5Z" fill="none" stroke="#f59a23" stroke-width="1.6"/><circle cx="5" cy="12" r="2.6" fill="#f59a23"/><rect x="4.2" y="5" width="1.6" height="6" fill="#f59a23"/></svg>
    <div class="t tn" style="left:40px;top:331px">Y Driver</div>
    <div class="t ta" style="left:712px;top:331px">-</div>
    <!-- chart -->
    <div class="t" style="left:46px;top:376px;font-size:13.5px;line-height:16px;color:#cfcfcf">Temperature °C</div>
    <div class="t yl" style="top:391px">50</div>
    <div class="t yl" style="top:432px">40</div>
    <div class="t yl" style="top:512px">20</div>
    <div class="t yl" style="top:593px">0</div>
<svg class="a" style="left:0;top:0;pointer-events:none" width="868" height="640" viewBox="0 0 868 640">
<path d="M45.2 418.8 L48.2 418.8 L51.2 418.5 L54.2 418.6 L57.2 418.8 L60.2 419.2 L63.2 418.6 L66.2 419.2 L69.2 418.5 L72.2 418.8 L75.2 418.9 L78.2 418.5 L81.2 418.8 L84.2 418.3 L87.2 418.6 L90.2 418.7 L93.2 418.9 L96.2 418.9 L99.2 418.7 L102.2 418.6 L105.2 418.8 L108.2 418.3 L111.2 418.5 L114.2 418.2 L117.2 418.6 L120.2 418.6 L123.2 418.1 L126.2 418.5 L129.2 418.5 L132.2 418.5 L135.2 418.5 L138.2 418.2 L141.2 418.3 L144.2 417.8 L147.2 418.1 L150.2 418.3 L153.2 418.0 L156.2 418.4 L159.2 418.2 L162.2 418.6 L165.2 419.0 L168.2 418.6 L171.2 419.1 L174.2 418.6 L177.2 419.0 L180.2 418.6 L183.2 418.4 L186.2 418.8 L189.2 418.4 L192.2 418.8 L195.2 418.9 L198.2 418.7 L201.2 418.8 L204.2 418.9 L207.2 418.8 L210.2 418.4 L213.2 418.4 L216.2 418.8 L219.2 418.1 L222.2 417.9 L225.2 418.3 L228.2 418.3 L231.2 419.0 L234.2 419.0 L237.2 419.1 L240.2 419.2 L243.2 419.1 L246.2 418.8 L249.2 419.2 L252.2 419.1 L255.2 419.3 L258.2 418.3 L261.2 418.7 L264.2 419.1 L267.2 419.0 L270.2 418.9 L273.2 418.4 L276.2 419.0 L279.2 419.1 L282.2 418.2 L285.2 418.3 L288.2 418.7 L291.2 418.4 L294.2 418.4 L297.2 418.9 L300.2 418.1 L303.2 418.1 L306.2 418.0 L309.2 418.4 L312.2 418.8 L315.2 418.8 L318.2 418.5 L321.2 418.5 L324.2 417.9 L327.2 418.2 L330.2 418.5 L333.2 418.7 L336.2 418.1 L339.2 418.3 L342.2 418.0 L345.2 418.3 L348.2 418.0 L351.2 418.2 L354.2 418.1 L357.2 418.2 L360.2 418.3 L363.2 418.0 L366.2 418.5 L369.2 418.7 L372.2 418.0 L375.2 418.2 L378.2 418.1 L381.2 418.3 L384.2 418.9 L387.2 418.2 L390.2 418.0 L393.2 418.1 L396.2 418.5 L399.2 418.5 L402.2 418.4 L405.2 418.6 L408.2 418.4 L411.2 418.8 L414.2 418.3 L417.2 418.3 L420.2 418.6 L423.2 419.0 L426.2 418.8 L429.2 418.5 L432.2 418.9 L435.2 418.6 L438.2 418.7 L441.2 418.4 L444.2 418.7 L447.2 419.0 L450.2 418.7 L453.2 418.4 L456.2 418.5 L459.2 418.4 L462.2 418.2 L465.2 418.4 L468.2 418.1 L471.2 418.0 L474.2 418.4 L477.2 417.8 L480.2 418.4 L483.2 418.3 L486.2 418.7 L489.2 418.5 L492.2 418.2 L495.2 418.5 L498.2 418.8 L501.2 418.0 L504.2 418.1 L507.2 418.5 L510.2 418.1 L513.2 418.5 L516.2 418.6 L519.2 418.7 L522.2 418.9 L525.2 418.5 L528.2 418.8 L531.2 418.5 L534.2 418.3 L537.2 418.2 L540.2 418.9 L543.2 418.6 L546.2 419.2 L549.2 418.5 L552.2 418.9 L555.2 418.4 L558.2 418.5 L561.2 419.2 L564.2 418.7 L567.2 418.5 L570.2 418.5 L573.2 418.5 L576.2 418.7 L579.2 419.0 L582.2 418.5 L585.2 419.1 L588.2 419.0 L591.2 419.2 L594.2 419.2 L597.2 419.1 L600.2 419.0 L603.2 419.0 L606.2 419.2 L609.2 419.2 L612.2 418.6 L615.2 418.8 L618.2 418.9 L621.2 418.4 L624.2 418.1 L627.2 418.4 L630.2 418.0 L633.2 418.2 L636.2 418.3 L639.2 418.5 L642.2 418.9 L645.2 418.6 L648.2 419.1 L651.2 418.6 L654.2 418.6 L657.2 419.0 L660.2 418.8 L663.2 418.9 L666.2 418.5 L669.2 418.6 L672.2 418.3 L675.2 418.9 L678.2 419.0 L681.2 418.8 L684.2 418.9 L687.2 419.2 L690.2 419.2 L693.2 419.6 L696.2 419.4 L699.2 419.0 L702.2 418.7 L705.2 418.4 L708.2 418.8 L711.2 418.7 L714.2 418.3 L717.2 418.3 L720.2 418.3 L723.2 418.0 L726.2 418.4 L729.2 418.2 L732.2 418.1 L735.2 418.0 L738.2 418.1 L741.2 418.8 L744.2 418.7 L747.2 418.4 L750.2 418.5 L753.2 418.4 L756.2 418.9 L759.2 418.2 L762.2 418.4 L765.2 418.7 L768.2 418.5 L771.2 418.7 L774.2 418.6 L777.2 417.9 L780.2 418.4 L783.2 418.2 L786.2 418.2 L789.2 418.6 L792.2 418.6 L795.2 418.5 L798.2 418.7 L801.2 418.7 L804.2 418.3 L807.2 418.5 L810.2 418.4 L813.2 418.7 L816.2 418.5 L819.2 417.7 L822.2 418.4 L825.2 417.8 L828.2 418.5 L828.2 601.0 L45.2 601.0 Z" fill="#2e2a32"/>
<path d="M834.2 418.5 L837.2 418.6 L840.2 418.7 L843.2 418.3 L846.2 418.0 L849.2 418.0 L849.2 601.0 L834.2 601.0 Z" fill="#2e2a32"/>
<path d="M45.2 433.5 L47.2 433.3 L49.2 433.6 L51.2 433.6 L53.2 434.4 L55.2 433.6 L57.2 434.3 L59.2 434.1 L61.2 434.1 L63.2 433.0 L65.2 433.9 L67.2 434.1 L69.2 433.1 L71.2 434.3 L73.2 434.2 L75.2 434.2 L77.2 434.4 L79.2 434.1 L81.2 434.2 L83.2 434.0 L85.2 433.4 L87.2 434.1 L89.2 434.0 L91.2 434.0 L93.2 435.6 L95.2 435.1 L97.2 435.5 L99.2 434.9 L101.2 435.6 L103.2 434.9 L105.2 434.7 L107.2 434.4 L109.2 435.4 L111.2 434.7 L113.2 434.5 L115.2 434.5 L117.2 434.0 L119.2 434.6 L121.2 433.9 L123.2 434.8 L125.2 435.0 L127.2 434.3 L129.2 434.1 L131.2 434.3 L133.2 434.5 L135.2 434.1 L137.2 435.1 L139.2 434.8 L141.2 434.5 L143.2 434.8 L145.2 433.4 L147.2 433.9 L149.2 433.5 L151.2 433.8 L153.2 435.1 L155.2 433.9 L157.2 434.9 L159.2 435.4 L161.2 434.5 L163.2 435.6 L165.2 434.0 L167.2 434.1 L169.2 434.1 L171.2 433.6 L173.2 433.4 L175.2 434.0 L177.2 433.9 L179.2 433.6 L181.2 434.7 L183.2 435.1 L185.2 435.2 L187.2 435.1 L189.2 434.4 L191.2 433.7 L193.2 434.2 L195.2 434.6 L197.2 433.9 L199.2 434.7 L201.2 434.8 L203.2 433.7 L205.2 434.2 L207.2 433.4 L209.2 433.5 L211.2 434.3 L213.2 434.7 L215.2 433.5 L217.2 433.3 L219.2 434.2 L221.2 433.6 L223.2 434.5 L225.2 434.3 L227.2 434.4 L229.2 433.9 L231.2 434.2 L233.2 433.0 L235.2 433.2 L237.2 434.3 L239.2 434.1 L241.2 433.6 L243.2 434.1 L245.2 434.0 L247.2 434.9 L249.2 435.5 L251.2 434.2 L253.2 433.7 L255.2 433.6 L257.2 433.5 L259.2 433.5 L261.2 434.0 L263.2 433.5 L265.2 434.0 L267.2 434.6 L269.2 432.8 L271.2 433.7 L273.2 432.8 L275.2 433.8 L277.2 433.8 L279.2 434.0 L281.2 433.0 L283.2 434.2 L285.2 435.4 L287.2 434.2 L289.2 434.0 L291.2 434.6 L293.2 433.5 L295.2 433.8 L297.2 434.6 L299.2 434.3 L301.2 435.1 L303.2 434.4 L305.2 434.1 L307.2 434.6 L309.2 436.3 L311.2 435.5 L313.2 435.2 L315.2 434.6 L317.2 434.1 L319.2 435.1 L321.2 433.9 L323.2 433.5 L325.2 433.7 L327.2 435.1 L329.2 434.4 L331.2 435.0 L333.2 434.1 L335.2 434.1 L337.2 435.4 L339.2 434.6 L341.2 434.4 L343.2 434.4 L345.2 434.7 L347.2 434.9 L349.2 434.2 L351.2 433.7 L353.2 434.5 L355.2 433.7 L357.2 433.7 L359.2 434.3 L361.2 433.4 L363.2 434.2 L365.2 433.3 L367.2 433.8 L369.2 433.3 L371.2 434.1 L373.2 434.7 L375.2 434.2 L377.2 433.3 L379.2 433.9 L381.2 433.5 L383.2 434.5 L385.2 433.2 L387.2 432.9 L389.2 434.6 L391.2 433.3 L393.2 433.7 L395.2 434.2 L397.2 433.4 L399.2 434.3 L401.2 433.7 L403.2 433.9 L405.2 433.7 L407.2 434.5 L409.2 433.2 L411.2 433.6 L413.2 433.6 L415.2 434.6 L417.2 434.0 L419.2 434.4 L421.2 434.5 L423.2 435.6 L425.2 434.5 L427.2 434.4 L429.2 434.9 L431.2 434.4 L433.2 435.0 L435.2 433.7 L437.2 434.2 L439.2 434.5 L441.2 434.0 L443.2 433.0 L445.2 432.4 L447.2 434.4 L449.2 434.6 L451.2 435.2 L453.2 433.7 L455.2 433.6 L457.2 434.7 L459.2 434.0 L461.2 433.5 L463.2 434.4 L465.2 433.5 L467.2 434.3 L469.2 434.8 L471.2 432.8 L473.2 434.9 L475.2 434.6 L477.2 433.2 L479.2 434.4 L481.2 433.0 L483.2 432.5 L485.2 434.6 L487.2 432.9 L489.2 434.0 L491.2 433.1 L493.2 434.4 L495.2 435.0 L497.2 434.9 L499.2 435.2 L501.2 435.2 L503.2 434.6 L505.2 433.8 L507.2 434.0 L509.2 433.6 L511.2 434.7 L513.2 434.2 L515.2 434.3 L517.2 434.8 L519.2 434.2 L521.2 434.6 L523.2 435.1 L525.2 434.0 L527.2 433.8 L529.2 434.8 L531.2 435.3 L533.2 434.7 L535.2 434.7 L537.2 434.1 L539.2 434.2 L541.2 434.7 L543.2 435.5 L545.2 435.3 L547.2 435.6 L549.2 434.2 L551.2 433.7 L553.2 435.1 L555.2 435.1 L557.2 434.4 L559.2 434.5 L561.2 433.7 L563.2 434.7 L565.2 433.5 L567.2 434.1 L569.2 434.1 L571.2 434.3 L573.2 433.5 L575.2 434.4 L577.2 435.0 L579.2 434.2 L581.2 434.9 L583.2 433.9 L585.2 433.8 L587.2 435.0 L589.2 434.2 L591.2 434.6 L593.2 433.9 L595.2 432.7 L597.2 434.3 L599.2 433.2 L601.2 433.4 L603.2 432.9 L605.2 434.3 L607.2 433.7 L609.2 434.4 L611.2 434.4 L613.2 434.4 L615.2 433.7 L617.2 434.1 L619.2 434.1 L621.2 434.3 L623.2 434.4 L625.2 434.3 L627.2 435.1 L629.2 434.3 L631.2 434.9 L633.2 433.8 L635.2 435.5 L637.2 435.1 L639.2 434.8 L641.2 434.7 L643.2 435.2 L645.2 433.7 L647.2 435.2 L649.2 434.5 L651.2 435.3 L653.2 435.3 L655.2 433.8 L657.2 434.7 L659.2 435.0 L661.2 433.3 L663.2 434.3 L665.2 433.8 L667.2 433.2 L669.2 434.1 L671.2 434.4 L673.2 433.3 L675.2 433.1 L677.2 433.0 L679.2 434.1 L681.2 432.9 L683.2 434.1 L685.2 434.1 L687.2 434.7 L689.2 434.0 L691.2 435.1 L693.2 433.5 L695.2 433.4 L697.2 432.7 L699.2 433.9 L701.2 433.6 L703.2 433.5 L705.2 432.5 L707.2 433.7 L709.2 433.5 L711.2 433.4 L713.2 433.1 L715.2 433.7 L717.2 433.5 L719.2 433.9 L721.2 434.5 L723.2 434.9 L725.2 434.6 L727.2 435.0 L729.2 434.8 L731.2 434.3 L733.2 434.1 L735.2 434.3 L737.2 434.5 L739.2 434.5 L741.2 435.0 L743.2 434.7 L745.2 434.6 L747.2 435.4 L749.2 435.1 L751.2 434.6 L753.2 433.8 L755.2 434.3 L757.2 435.8 L759.2 434.7 L761.2 435.1 L763.2 434.4 L765.2 435.6 L767.2 434.1 L769.2 435.1 L771.2 434.6 L773.2 434.0 L775.2 434.2 L777.2 433.6 L779.2 433.8 L781.2 433.2 L783.2 433.9 L785.2 433.9 L787.2 432.8 L789.2 432.3 L791.2 433.4 L793.2 432.4 L795.2 433.4 L797.2 433.4 L799.2 433.6 L801.2 433.4 L803.2 434.0 L805.2 432.9 L807.2 433.7 L809.2 434.3 L811.2 434.2 L813.2 435.0 L815.2 434.1 L817.2 432.9 L819.2 433.7 L821.2 432.7 L823.2 434.8 L825.2 434.0 L827.2 433.1 L827.2 601.0 L45.2 601.0 Z" fill="#392c3c"/>
<path d="M833.2 433.8 L835.2 433.6 L837.2 433.2 L839.2 433.8 L841.2 434.5 L843.2 434.3 L845.2 433.6 L847.2 433.8 L849.2 433.7 L849.2 601.0 L833.2 601.0 Z" fill="#392c3c"/>
<path d="M45.2 493.7 L47.2 493.6 L49.2 493.9 L51.2 493.5 L53.2 493.8 L55.2 493.5 L57.2 493.4 L59.2 493.5 L61.2 493.7 L63.2 493.7 L65.2 493.9 L67.2 493.7 L69.2 493.6 L71.2 493.9 L73.2 493.7 L75.2 493.7 L77.2 494.0 L79.2 493.8 L81.2 493.9 L83.2 493.8 L85.2 493.8 L87.2 493.6 L89.2 493.8 L91.2 494.0 L93.2 494.0 L95.2 494.1 L97.2 493.8 L99.2 493.7 L101.2 494.1 L103.2 493.9 L105.2 493.9 L107.2 494.0 L109.2 493.8 L111.2 494.0 L113.2 494.0 L115.2 493.8 L117.2 493.8 L119.2 493.9 L121.2 494.2 L123.2 493.7 L125.2 493.7 L127.2 493.9 L129.2 493.6 L131.2 493.6 L133.2 493.9 L135.2 493.9 L137.2 493.7 L139.2 493.7 L141.2 494.0 L143.2 494.0 L145.2 493.9 L147.2 493.9 L149.2 493.8 L151.2 494.0 L153.2 493.8 L155.2 494.0 L157.2 494.1 L159.2 494.2 L161.2 494.0 L163.2 493.9 L165.2 494.2 L167.2 494.1 L169.2 493.8 L171.2 494.0 L173.2 493.8 L175.2 493.7 L177.2 493.8 L179.2 494.0 L181.2 494.1 L183.2 493.9 L185.2 493.7 L187.2 493.9 L189.2 493.9 L191.2 493.8 L193.2 493.7 L195.2 493.7 L197.2 493.7 L199.2 493.9 L201.2 494.0 L203.2 493.7 L205.2 493.9 L207.2 494.0 L209.2 494.0 L211.2 494.2 L213.2 494.1 L215.2 494.0 L217.2 494.1 L219.2 493.8 L221.2 493.7 L223.2 494.0 L225.2 493.9 L227.2 494.0 L229.2 493.9 L231.2 494.0 L233.2 493.8 L235.2 493.9 L237.2 493.7 L239.2 493.7 L241.2 494.1 L243.2 494.1 L245.2 494.0 L247.2 494.2 L249.2 494.1 L251.2 493.9 L253.2 493.9 L255.2 493.8 L257.2 494.1 L259.2 493.7 L261.2 494.0 L263.2 493.7 L265.2 494.0 L267.2 493.8 L269.2 493.8 L271.2 494.1 L273.2 493.9 L275.2 493.6 L277.2 494.0 L279.2 493.8 L281.2 493.6 L283.2 493.5 L285.2 493.6 L287.2 493.7 L289.2 493.8 L291.2 493.8 L293.2 493.8 L295.2 493.5 L297.2 493.7 L299.2 493.5 L301.2 493.7 L303.2 493.8 L305.2 493.9 L307.2 494.0 L309.2 493.7 L311.2 493.9 L313.2 493.9 L315.2 493.8 L317.2 493.6 L319.2 493.8 L321.2 493.8 L323.2 493.8 L325.2 493.9 L327.2 493.9 L329.2 493.7 L331.2 494.0 L333.2 494.0 L335.2 494.1 L337.2 494.0 L339.2 494.2 L341.2 494.1 L343.2 494.2 L345.2 494.3 L347.2 493.8 L349.2 493.9 L351.2 493.8 L353.2 494.0 L355.2 494.1 L357.2 494.1 L359.2 493.7 L361.2 493.6 L363.2 493.8 L365.2 494.0 L367.2 493.8 L369.2 493.9 L371.2 493.8 L373.2 493.6 L375.2 493.8 L377.2 493.7 L379.2 494.0 L381.2 493.8 L383.2 493.8 L385.2 493.7 L387.2 494.1 L389.2 493.8 L391.2 493.7 L393.2 493.5 L395.2 493.7 L397.2 493.9 L399.2 493.9 L401.2 493.9 L403.2 493.6 L405.2 494.0 L407.2 494.0 L409.2 494.0 L411.2 493.6 L413.2 493.7 L415.2 493.7 L417.2 493.8 L419.2 493.8 L421.2 493.6 L423.2 493.8 L425.2 493.8 L427.2 493.8 L429.2 494.0 L431.2 493.9 L433.2 493.6 L435.2 493.5 L437.2 493.5 L439.2 493.7 L441.2 493.5 L443.2 493.6 L445.2 493.5 L447.2 493.6 L449.2 493.5 L451.2 493.9 L453.2 493.7 L455.2 493.8 L457.2 493.8 L459.2 493.9 L461.2 493.9 L463.2 494.1 L465.2 493.8 L467.2 493.8 L469.2 494.1 L471.2 494.0 L473.2 493.9 L475.2 493.9 L477.2 494.0 L479.2 494.1 L481.2 494.1 L483.2 493.8 L485.2 493.8 L487.2 494.0 L489.2 493.6 L491.2 493.7 L493.2 494.0 L495.2 493.7 L497.2 493.8 L499.2 493.8 L501.2 493.8 L503.2 493.8 L505.2 494.0 L507.2 493.9 L509.2 493.7 L511.2 493.6 L513.2 493.4 L515.2 493.6 L517.2 493.6 L519.2 493.6 L521.2 493.9 L523.2 493.6 L525.2 493.9 L527.2 493.9 L529.2 493.6 L531.2 493.6 L533.2 493.9 L535.2 493.9 L537.2 493.7 L539.2 494.1 L541.2 493.8 L543.2 494.0 L545.2 493.9 L547.2 494.2 L549.2 493.9 L551.2 493.7 L553.2 493.9 L555.2 493.9 L557.2 493.6 L559.2 493.9 L561.2 493.7 L563.2 493.8 L565.2 493.9 L567.2 493.7 L569.2 493.6 L571.2 493.8 L573.2 493.7 L575.2 494.0 L577.2 493.9 L579.2 493.8 L581.2 494.0 L583.2 494.0 L585.2 494.2 L587.2 493.8 L589.2 494.2 L591.2 494.1 L593.2 494.0 L595.2 494.0 L597.2 493.8 L599.2 494.0 L601.2 493.7 L603.2 493.6 L605.2 493.7 L607.2 493.8 L609.2 493.5 L611.2 493.5 L613.2 493.6 L615.2 493.6 L617.2 493.7 L619.2 493.7 L621.2 493.8 L623.2 493.6 L625.2 493.9 L627.2 494.0 L629.2 494.1 L631.2 493.9 L633.2 494.0 L635.2 494.0 L637.2 494.2 L639.2 494.1 L641.2 493.9 L643.2 493.9 L645.2 493.7 L647.2 494.0 L649.2 493.6 L651.2 493.7 L653.2 493.7 L655.2 494.0 L657.2 493.9 L659.2 494.1 L661.2 494.0 L663.2 494.0 L665.2 494.0 L667.2 493.7 L669.2 493.9 L671.2 493.6 L673.2 493.9 L675.2 493.5 L677.2 493.9 L679.2 493.8 L681.2 493.7 L683.2 493.7 L685.2 493.6 L687.2 493.7 L689.2 493.7 L691.2 493.8 L693.2 493.8 L695.2 493.9 L697.2 494.0 L699.2 494.1 L701.2 493.7 L703.2 493.8 L705.2 493.6 L707.2 493.9 L709.2 494.0 L711.2 493.9 L713.2 493.7 L715.2 493.6 L717.2 493.6 L719.2 493.7 L721.2 493.7 L723.2 493.5 L725.2 493.7 L727.2 493.4 L729.2 493.7 L731.2 493.4 L733.2 493.9 L735.2 493.7 L737.2 493.7 L739.2 493.7 L741.2 493.7 L743.2 493.9 L745.2 493.8 L747.2 493.9 L749.2 493.8 L751.2 493.9 L753.2 493.6 L755.2 494.0 L757.2 493.9 L759.2 493.7 L761.2 493.7 L763.2 493.6 L765.2 493.5 L767.2 493.7 L769.2 493.8 L771.2 493.8 L773.2 494.0 L775.2 493.8 L777.2 493.8 L779.2 494.0 L781.2 494.0 L783.2 494.1 L785.2 493.8 L787.2 493.7 L789.2 494.0 L791.2 493.9 L793.2 494.0 L795.2 493.7 L797.2 494.0 L799.2 493.7 L801.2 493.9 L803.2 493.9 L805.2 493.7 L807.2 493.8 L809.2 493.8 L811.2 494.0 L813.2 493.5 L815.2 494.0 L817.2 493.7 L819.2 493.8 L821.2 494.0 L823.2 494.2 L825.2 494.2 L827.2 493.9 L827.2 601.0 L45.2 601.0 Z" fill="#433447"/>
<path d="M833.2 493.8 L835.2 494.0 L837.2 493.9 L839.2 494.0 L841.2 493.7 L843.2 493.8 L845.2 494.0 L847.2 494.1 L849.2 494.0 L849.2 601.0 L833.2 601.0 Z" fill="#433447"/>
<line x1="45.2" x2="849.3" y1="399.5" y2="399.5" stroke="#ffffff" stroke-opacity="0.07" stroke-width="1"/>
<line x1="45.2" x2="849.3" y1="439.8" y2="439.8" stroke="#ffffff" stroke-opacity="0.07" stroke-width="1"/>
<line x1="45.2" x2="849.3" y1="520.4" y2="520.4" stroke="#ffffff" stroke-opacity="0.07" stroke-width="1"/>
<line x1="93.2" x2="93.2" y1="399.5" y2="601.0" stroke="#ffffff" stroke-opacity="0.08" stroke-width="1"/>
<line x1="173.3" x2="173.3" y1="399.5" y2="601.0" stroke="#ffffff" stroke-opacity="0.08" stroke-width="1"/>
<line x1="253.3" x2="253.3" y1="399.5" y2="601.0" stroke="#ffffff" stroke-opacity="0.08" stroke-width="1"/>
<line x1="333.5" x2="333.5" y1="399.5" y2="601.0" stroke="#ffffff" stroke-opacity="0.08" stroke-width="1"/>
<line x1="414.7" x2="414.7" y1="399.5" y2="601.0" stroke="#ffffff" stroke-opacity="0.08" stroke-width="1"/>
<line x1="495.3" x2="495.3" y1="399.5" y2="601.0" stroke="#ffffff" stroke-opacity="0.08" stroke-width="1"/>
<line x1="575.8" x2="575.8" y1="399.5" y2="601.0" stroke="#ffffff" stroke-opacity="0.08" stroke-width="1"/>
<line x1="656.1" x2="656.1" y1="399.5" y2="601.0" stroke="#ffffff" stroke-opacity="0.08" stroke-width="1"/>
<line x1="736.2" x2="736.2" y1="399.5" y2="601.0" stroke="#ffffff" stroke-opacity="0.08" stroke-width="1"/>
<line x1="816.7" x2="816.7" y1="399.5" y2="601.0" stroke="#ffffff" stroke-opacity="0.08" stroke-width="1"/>
<line x1="45.2" x2="849.3" y1="600.2" y2="600.2" stroke="#9c9cb8" stroke-width="1.6" stroke-dasharray="4 2"/>
<path d="M45.2 496.2 L47.2 496.2 L49.2 496.2 L51.2 496.2 L53.2 496.2 L55.2 496.2 L57.2 496.2 L59.2 496.2 L61.2 496.2 L63.2 496.2 L65.2 496.2 L67.2 496.2 L69.2 496.2 L71.2 496.2 L73.2 496.2 L75.2 496.2 L77.2 496.2 L79.2 496.2 L81.2 496.2 L83.2 496.2 L85.2 496.2 L87.2 496.2 L89.2 496.2 L91.2 496.2 L93.2 496.2 L95.2 496.2 L97.2 496.2 L99.2 496.2 L101.2 496.2 L103.2 496.2 L105.2 496.2 L107.2 496.2 L109.2 496.2 L111.2 496.2 L113.2 496.2 L115.2 496.2 L117.2 496.2 L119.2 496.2 L121.2 496.2 L123.2 496.2 L125.2 496.2 L127.2 496.2 L129.2 496.2 L131.2 496.2 L133.2 496.2 L135.2 496.2 L137.2 496.2 L139.2 496.2 L141.2 496.2 L143.2 496.2 L145.2 496.2 L147.2 496.2 L149.2 496.2 L151.2 496.2 L153.2 496.2 L155.2 496.2 L157.2 496.2 L159.2 496.2 L161.2 496.2 L163.2 496.2 L165.2 496.2 L167.2 496.2 L169.2 496.2 L171.2 496.2 L173.2 496.2 L175.2 496.2 L177.2 496.2 L179.2 496.2 L181.2 496.2 L183.2 496.2 L185.2 496.2 L187.2 496.2 L189.2 496.2 L191.2 496.2 L193.2 496.2 L195.2 496.2 L197.2 496.2 L199.2 496.2 L201.2 496.2 L203.2 496.2 L205.2 496.2 L207.2 496.2 L209.2 496.2 L211.2 496.2 L213.2 496.2 L215.2 496.2 L217.2 496.2 L219.2 496.2 L221.2 496.2 L223.2 496.2 L225.2 496.2 L227.2 496.2 L229.2 496.2 L231.2 496.2 L233.2 496.2 L235.2 496.2 L237.2 496.2 L239.2 496.2 L241.2 496.2 L243.2 496.2 L245.2 496.2 L247.2 496.2 L249.2 496.2 L251.2 496.2 L253.2 496.2 L255.2 496.2 L257.2 496.2 L259.2 496.2 L261.2 496.2 L263.2 496.2 L265.2 496.2 L267.2 496.2 L269.2 496.2 L271.2 496.2 L273.2 496.2 L275.2 496.2 L277.2 496.2 L279.2 496.2 L281.2 496.2 L283.2 496.2 L285.2 496.2 L287.2 496.2 L289.2 496.2 L291.2 496.2 L293.2 496.2 L295.2 496.2 L297.2 496.2 L299.2 496.2 L301.2 496.2 L303.2 496.2 L305.2 496.2 L307.2 496.2 L309.2 496.2 L311.2 496.2 L313.2 496.2 L315.2 496.2 L317.2 496.2 L319.2 496.2 L321.2 496.2 L323.2 496.2 L325.2 496.2 L327.2 496.2 L329.2 496.2 L331.2 496.2 L333.2 496.2 L335.2 496.2 L337.2 496.2 L339.2 496.2 L341.2 496.2 L343.2 496.2 L345.2 496.2 L347.2 496.2 L349.2 496.2 L351.2 496.2 L353.2 496.2 L355.2 496.2 L357.2 496.2 L359.2 496.2 L361.2 496.2 L363.2 496.2 L365.2 496.2 L367.2 496.2 L369.2 496.2 L371.2 496.2 L373.2 496.2 L375.2 496.2 L377.2 496.2 L379.2 496.2 L381.2 496.2 L383.2 496.2 L385.2 496.2 L387.2 496.2 L389.2 496.2 L391.2 496.2 L393.2 496.2 L395.2 496.2 L397.2 496.2 L399.2 496.2 L401.2 496.2 L403.2 496.2 L405.2 496.2 L407.2 496.2 L409.2 496.2 L411.2 496.2 L413.2 496.2 L415.2 496.2 L417.2 496.2 L419.2 496.2 L421.2 496.2 L423.2 496.2 L425.2 496.2 L427.2 496.2 L429.2 496.2 L431.2 496.2 L433.2 496.2 L435.2 496.2 L437.2 496.2 L439.2 496.2 L441.2 496.2 L443.2 496.2 L445.2 496.2 L447.2 496.2 L449.2 496.2 L451.2 496.2 L453.2 496.2 L455.2 496.2 L457.2 496.2 L459.2 496.2 L461.2 496.2 L463.2 496.2 L465.2 496.2 L467.2 496.2 L469.2 496.2 L471.2 496.2 L473.2 496.2 L475.2 496.2 L477.2 496.2 L479.2 496.2 L481.2 496.2 L483.2 496.2 L485.2 496.2 L487.2 496.2 L489.2 496.2 L491.2 496.2 L493.2 496.2 L495.2 496.2 L497.2 496.2 L499.2 496.2 L501.2 496.2 L503.2 496.2 L505.2 496.2 L507.2 496.2 L509.2 496.2 L511.2 496.2 L513.2 496.2 L515.2 496.2 L517.2 496.2 L519.2 496.2 L521.2 496.2 L523.2 496.2 L525.2 496.2 L527.2 496.2 L529.2 496.2 L531.2 496.2 L533.2 496.2 L535.2 496.2 L537.2 496.2 L539.2 496.2 L541.2 496.2 L543.2 496.2 L545.2 496.2 L547.2 496.2 L549.2 496.2 L551.2 496.2 L553.2 496.2 L555.2 496.2 L557.2 496.2 L559.2 496.2 L561.2 496.2 L563.2 496.2 L565.2 496.2 L567.2 496.2 L569.2 496.2 L571.2 496.2 L573.2 496.2 L575.2 496.2 L577.2 496.2 L579.2 496.2 L581.2 496.2 L583.2 496.2 L585.2 496.2 L587.2 496.2 L589.2 496.2 L591.2 496.2 L593.2 496.2 L595.2 496.2 L597.2 496.2 L599.2 496.2 L601.2 496.2 L603.2 496.2 L605.2 496.2 L607.2 496.2 L609.2 496.2 L611.2 496.2 L613.2 496.2 L615.2 496.2 L617.2 496.2 L619.2 496.2 L621.2 496.2 L623.2 496.2 L625.2 496.2 L627.2 496.2 L629.2 496.2 L631.2 496.2 L633.2 496.2 L635.2 496.2 L637.2 496.2 L639.2 496.2 L641.2 496.2 L643.2 496.2 L645.2 496.2 L647.2 496.2 L649.2 496.2 L651.2 496.2 L653.2 496.2 L655.2 496.2 L657.2 496.2 L659.2 496.2 L661.2 496.2 L663.2 496.2 L665.2 496.2 L667.2 496.2 L669.2 496.2 L671.2 496.2 L673.2 496.2 L675.2 496.2 L677.2 496.2 L679.2 496.2 L681.2 496.2 L683.2 496.2 L685.2 496.2 L687.2 496.2 L689.2 496.2 L691.2 496.2 L693.2 496.2 L695.2 496.2 L697.2 496.2 L699.2 496.2 L701.2 496.2 L703.2 496.2 L705.2 496.2 L707.2 496.2 L709.2 496.2 L711.2 496.2 L713.2 496.2 L715.2 496.2 L717.2 496.2 L719.2 496.2 L721.2 496.2 L723.2 496.2 L725.2 496.2 L727.2 496.2 L729.2 496.2 L731.2 496.2 L733.2 496.2 L735.2 496.2 L737.2 496.2 L739.2 496.2 L741.2 496.2 L743.2 496.2 L745.2 496.2 L747.2 496.2 L749.2 496.2 L751.2 496.2 L753.2 496.2 L755.2 496.2 L757.2 496.2 L759.2 496.2 L761.2 496.2 L763.2 496.2 L765.2 496.2 L767.2 496.2 L769.2 496.2 L771.2 496.2 L773.2 496.2 L775.2 496.2 L777.2 496.2 L779.2 496.2 L781.2 496.2 L783.2 496.2 L785.2 496.2 L787.2 496.2 L789.2 496.2 L791.2 496.2 L793.2 496.2 L795.2 496.2 L797.2 496.2 L799.2 496.2 L801.2 496.2 L803.2 496.2 L805.2 496.2 L807.2 496.2 L809.2 496.2 L811.2 496.2 L813.2 496.2 L815.2 496.2 L817.2 496.2 L819.2 496.2 L821.2 496.2 L823.2 496.2 L825.2 496.2 L827.2 496.2" fill="none" stroke="#e5484d" stroke-width="2.2"/>
<path d="M833.2 496.2 L835.2 496.2 L837.2 496.2 L839.2 496.2 L841.2 496.2 L843.2 496.2 L845.2 496.2 L847.2 496.2 L849.2 496.2" fill="none" stroke="#e5484d" stroke-width="2.2"/>
<path d="M45.2 493.7 L47.2 493.6 L49.2 493.9 L51.2 493.5 L53.2 493.8 L55.2 493.5 L57.2 493.4 L59.2 493.5 L61.2 493.7 L63.2 493.7 L65.2 493.9 L67.2 493.7 L69.2 493.6 L71.2 493.9 L73.2 493.7 L75.2 493.7 L77.2 494.0 L79.2 493.8 L81.2 493.9 L83.2 493.8 L85.2 493.8 L87.2 493.6 L89.2 493.8 L91.2 494.0 L93.2 494.0 L95.2 494.1 L97.2 493.8 L99.2 493.7 L101.2 494.1 L103.2 493.9 L105.2 493.9 L107.2 494.0 L109.2 493.8 L111.2 494.0 L113.2 494.0 L115.2 493.8 L117.2 493.8 L119.2 493.9 L121.2 494.2 L123.2 493.7 L125.2 493.7 L127.2 493.9 L129.2 493.6 L131.2 493.6 L133.2 493.9 L135.2 493.9 L137.2 493.7 L139.2 493.7 L141.2 494.0 L143.2 494.0 L145.2 493.9 L147.2 493.9 L149.2 493.8 L151.2 494.0 L153.2 493.8 L155.2 494.0 L157.2 494.1 L159.2 494.2 L161.2 494.0 L163.2 493.9 L165.2 494.2 L167.2 494.1 L169.2 493.8 L171.2 494.0 L173.2 493.8 L175.2 493.7 L177.2 493.8 L179.2 494.0 L181.2 494.1 L183.2 493.9 L185.2 493.7 L187.2 493.9 L189.2 493.9 L191.2 493.8 L193.2 493.7 L195.2 493.7 L197.2 493.7 L199.2 493.9 L201.2 494.0 L203.2 493.7 L205.2 493.9 L207.2 494.0 L209.2 494.0 L211.2 494.2 L213.2 494.1 L215.2 494.0 L217.2 494.1 L219.2 493.8 L221.2 493.7 L223.2 494.0 L225.2 493.9 L227.2 494.0 L229.2 493.9 L231.2 494.0 L233.2 493.8 L235.2 493.9 L237.2 493.7 L239.2 493.7 L241.2 494.1 L243.2 494.1 L245.2 494.0 L247.2 494.2 L249.2 494.1 L251.2 493.9 L253.2 493.9 L255.2 493.8 L257.2 494.1 L259.2 493.7 L261.2 494.0 L263.2 493.7 L265.2 494.0 L267.2 493.8 L269.2 493.8 L271.2 494.1 L273.2 493.9 L275.2 493.6 L277.2 494.0 L279.2 493.8 L281.2 493.6 L283.2 493.5 L285.2 493.6 L287.2 493.7 L289.2 493.8 L291.2 493.8 L293.2 493.8 L295.2 493.5 L297.2 493.7 L299.2 493.5 L301.2 493.7 L303.2 493.8 L305.2 493.9 L307.2 494.0 L309.2 493.7 L311.2 493.9 L313.2 493.9 L315.2 493.8 L317.2 493.6 L319.2 493.8 L321.2 493.8 L323.2 493.8 L325.2 493.9 L327.2 493.9 L329.2 493.7 L331.2 494.0 L333.2 494.0 L335.2 494.1 L337.2 494.0 L339.2 494.2 L341.2 494.1 L343.2 494.2 L345.2 494.3 L347.2 493.8 L349.2 493.9 L351.2 493.8 L353.2 494.0 L355.2 494.1 L357.2 494.1 L359.2 493.7 L361.2 493.6 L363.2 493.8 L365.2 494.0 L367.2 493.8 L369.2 493.9 L371.2 493.8 L373.2 493.6 L375.2 493.8 L377.2 493.7 L379.2 494.0 L381.2 493.8 L383.2 493.8 L385.2 493.7 L387.2 494.1 L389.2 493.8 L391.2 493.7 L393.2 493.5 L395.2 493.7 L397.2 493.9 L399.2 493.9 L401.2 493.9 L403.2 493.6 L405.2 494.0 L407.2 494.0 L409.2 494.0 L411.2 493.6 L413.2 493.7 L415.2 493.7 L417.2 493.8 L419.2 493.8 L421.2 493.6 L423.2 493.8 L425.2 493.8 L427.2 493.8 L429.2 494.0 L431.2 493.9 L433.2 493.6 L435.2 493.5 L437.2 493.5 L439.2 493.7 L441.2 493.5 L443.2 493.6 L445.2 493.5 L447.2 493.6 L449.2 493.5 L451.2 493.9 L453.2 493.7 L455.2 493.8 L457.2 493.8 L459.2 493.9 L461.2 493.9 L463.2 494.1 L465.2 493.8 L467.2 493.8 L469.2 494.1 L471.2 494.0 L473.2 493.9 L475.2 493.9 L477.2 494.0 L479.2 494.1 L481.2 494.1 L483.2 493.8 L485.2 493.8 L487.2 494.0 L489.2 493.6 L491.2 493.7 L493.2 494.0 L495.2 493.7 L497.2 493.8 L499.2 493.8 L501.2 493.8 L503.2 493.8 L505.2 494.0 L507.2 493.9 L509.2 493.7 L511.2 493.6 L513.2 493.4 L515.2 493.6 L517.2 493.6 L519.2 493.6 L521.2 493.9 L523.2 493.6 L525.2 493.9 L527.2 493.9 L529.2 493.6 L531.2 493.6 L533.2 493.9 L535.2 493.9 L537.2 493.7 L539.2 494.1 L541.2 493.8 L543.2 494.0 L545.2 493.9 L547.2 494.2 L549.2 493.9 L551.2 493.7 L553.2 493.9 L555.2 493.9 L557.2 493.6 L559.2 493.9 L561.2 493.7 L563.2 493.8 L565.2 493.9 L567.2 493.7 L569.2 493.6 L571.2 493.8 L573.2 493.7 L575.2 494.0 L577.2 493.9 L579.2 493.8 L581.2 494.0 L583.2 494.0 L585.2 494.2 L587.2 493.8 L589.2 494.2 L591.2 494.1 L593.2 494.0 L595.2 494.0 L597.2 493.8 L599.2 494.0 L601.2 493.7 L603.2 493.6 L605.2 493.7 L607.2 493.8 L609.2 493.5 L611.2 493.5 L613.2 493.6 L615.2 493.6 L617.2 493.7 L619.2 493.7 L621.2 493.8 L623.2 493.6 L625.2 493.9 L627.2 494.0 L629.2 494.1 L631.2 493.9 L633.2 494.0 L635.2 494.0 L637.2 494.2 L639.2 494.1 L641.2 493.9 L643.2 493.9 L645.2 493.7 L647.2 494.0 L649.2 493.6 L651.2 493.7 L653.2 493.7 L655.2 494.0 L657.2 493.9 L659.2 494.1 L661.2 494.0 L663.2 494.0 L665.2 494.0 L667.2 493.7 L669.2 493.9 L671.2 493.6 L673.2 493.9 L675.2 493.5 L677.2 493.9 L679.2 493.8 L681.2 493.7 L683.2 493.7 L685.2 493.6 L687.2 493.7 L689.2 493.7 L691.2 493.8 L693.2 493.8 L695.2 493.9 L697.2 494.0 L699.2 494.1 L701.2 493.7 L703.2 493.8 L705.2 493.6 L707.2 493.9 L709.2 494.0 L711.2 493.9 L713.2 493.7 L715.2 493.6 L717.2 493.6 L719.2 493.7 L721.2 493.7 L723.2 493.5 L725.2 493.7 L727.2 493.4 L729.2 493.7 L731.2 493.4 L733.2 493.9 L735.2 493.7 L737.2 493.7 L739.2 493.7 L741.2 493.7 L743.2 493.9 L745.2 493.8 L747.2 493.9 L749.2 493.8 L751.2 493.9 L753.2 493.6 L755.2 494.0 L757.2 493.9 L759.2 493.7 L761.2 493.7 L763.2 493.6 L765.2 493.5 L767.2 493.7 L769.2 493.8 L771.2 493.8 L773.2 494.0 L775.2 493.8 L777.2 493.8 L779.2 494.0 L781.2 494.0 L783.2 494.1 L785.2 493.8 L787.2 493.7 L789.2 494.0 L791.2 493.9 L793.2 494.0 L795.2 493.7 L797.2 494.0 L799.2 493.7 L801.2 493.9 L803.2 493.9 L805.2 493.7 L807.2 493.8 L809.2 493.8 L811.2 494.0 L813.2 493.5 L815.2 494.0 L817.2 493.7 L819.2 493.8 L821.2 494.0 L823.2 494.2 L825.2 494.2 L827.2 493.9" fill="none" stroke="#36a2ec" stroke-width="2.2"/>
<path d="M833.2 493.8 L835.2 494.0 L837.2 493.9 L839.2 494.0 L841.2 493.7 L843.2 493.8 L845.2 494.0 L847.2 494.1 L849.2 494.0" fill="none" stroke="#36a2ec" stroke-width="2.2"/>
<path d="M45.2 433.5 L47.2 433.3 L49.2 433.6 L51.2 433.6 L53.2 434.4 L55.2 433.6 L57.2 434.3 L59.2 434.1 L61.2 434.1 L63.2 433.0 L65.2 433.9 L67.2 434.1 L69.2 433.1 L71.2 434.3 L73.2 434.2 L75.2 434.2 L77.2 434.4 L79.2 434.1 L81.2 434.2 L83.2 434.0 L85.2 433.4 L87.2 434.1 L89.2 434.0 L91.2 434.0 L93.2 435.6 L95.2 435.1 L97.2 435.5 L99.2 434.9 L101.2 435.6 L103.2 434.9 L105.2 434.7 L107.2 434.4 L109.2 435.4 L111.2 434.7 L113.2 434.5 L115.2 434.5 L117.2 434.0 L119.2 434.6 L121.2 433.9 L123.2 434.8 L125.2 435.0 L127.2 434.3 L129.2 434.1 L131.2 434.3 L133.2 434.5 L135.2 434.1 L137.2 435.1 L139.2 434.8 L141.2 434.5 L143.2 434.8 L145.2 433.4 L147.2 433.9 L149.2 433.5 L151.2 433.8 L153.2 435.1 L155.2 433.9 L157.2 434.9 L159.2 435.4 L161.2 434.5 L163.2 435.6 L165.2 434.0 L167.2 434.1 L169.2 434.1 L171.2 433.6 L173.2 433.4 L175.2 434.0 L177.2 433.9 L179.2 433.6 L181.2 434.7 L183.2 435.1 L185.2 435.2 L187.2 435.1 L189.2 434.4 L191.2 433.7 L193.2 434.2 L195.2 434.6 L197.2 433.9 L199.2 434.7 L201.2 434.8 L203.2 433.7 L205.2 434.2 L207.2 433.4 L209.2 433.5 L211.2 434.3 L213.2 434.7 L215.2 433.5 L217.2 433.3 L219.2 434.2 L221.2 433.6 L223.2 434.5 L225.2 434.3 L227.2 434.4 L229.2 433.9 L231.2 434.2 L233.2 433.0 L235.2 433.2 L237.2 434.3 L239.2 434.1 L241.2 433.6 L243.2 434.1 L245.2 434.0 L247.2 434.9 L249.2 435.5 L251.2 434.2 L253.2 433.7 L255.2 433.6 L257.2 433.5 L259.2 433.5 L261.2 434.0 L263.2 433.5 L265.2 434.0 L267.2 434.6 L269.2 432.8 L271.2 433.7 L273.2 432.8 L275.2 433.8 L277.2 433.8 L279.2 434.0 L281.2 433.0 L283.2 434.2 L285.2 435.4 L287.2 434.2 L289.2 434.0 L291.2 434.6 L293.2 433.5 L295.2 433.8 L297.2 434.6 L299.2 434.3 L301.2 435.1 L303.2 434.4 L305.2 434.1 L307.2 434.6 L309.2 436.3 L311.2 435.5 L313.2 435.2 L315.2 434.6 L317.2 434.1 L319.2 435.1 L321.2 433.9 L323.2 433.5 L325.2 433.7 L327.2 435.1 L329.2 434.4 L331.2 435.0 L333.2 434.1 L335.2 434.1 L337.2 435.4 L339.2 434.6 L341.2 434.4 L343.2 434.4 L345.2 434.7 L347.2 434.9 L349.2 434.2 L351.2 433.7 L353.2 434.5 L355.2 433.7 L357.2 433.7 L359.2 434.3 L361.2 433.4 L363.2 434.2 L365.2 433.3 L367.2 433.8 L369.2 433.3 L371.2 434.1 L373.2 434.7 L375.2 434.2 L377.2 433.3 L379.2 433.9 L381.2 433.5 L383.2 434.5 L385.2 433.2 L387.2 432.9 L389.2 434.6 L391.2 433.3 L393.2 433.7 L395.2 434.2 L397.2 433.4 L399.2 434.3 L401.2 433.7 L403.2 433.9 L405.2 433.7 L407.2 434.5 L409.2 433.2 L411.2 433.6 L413.2 433.6 L415.2 434.6 L417.2 434.0 L419.2 434.4 L421.2 434.5 L423.2 435.6 L425.2 434.5 L427.2 434.4 L429.2 434.9 L431.2 434.4 L433.2 435.0 L435.2 433.7 L437.2 434.2 L439.2 434.5 L441.2 434.0 L443.2 433.0 L445.2 432.4 L447.2 434.4 L449.2 434.6 L451.2 435.2 L453.2 433.7 L455.2 433.6 L457.2 434.7 L459.2 434.0 L461.2 433.5 L463.2 434.4 L465.2 433.5 L467.2 434.3 L469.2 434.8 L471.2 432.8 L473.2 434.9 L475.2 434.6 L477.2 433.2 L479.2 434.4 L481.2 433.0 L483.2 432.5 L485.2 434.6 L487.2 432.9 L489.2 434.0 L491.2 433.1 L493.2 434.4 L495.2 435.0 L497.2 434.9 L499.2 435.2 L501.2 435.2 L503.2 434.6 L505.2 433.8 L507.2 434.0 L509.2 433.6 L511.2 434.7 L513.2 434.2 L515.2 434.3 L517.2 434.8 L519.2 434.2 L521.2 434.6 L523.2 435.1 L525.2 434.0 L527.2 433.8 L529.2 434.8 L531.2 435.3 L533.2 434.7 L535.2 434.7 L537.2 434.1 L539.2 434.2 L541.2 434.7 L543.2 435.5 L545.2 435.3 L547.2 435.6 L549.2 434.2 L551.2 433.7 L553.2 435.1 L555.2 435.1 L557.2 434.4 L559.2 434.5 L561.2 433.7 L563.2 434.7 L565.2 433.5 L567.2 434.1 L569.2 434.1 L571.2 434.3 L573.2 433.5 L575.2 434.4 L577.2 435.0 L579.2 434.2 L581.2 434.9 L583.2 433.9 L585.2 433.8 L587.2 435.0 L589.2 434.2 L591.2 434.6 L593.2 433.9 L595.2 432.7 L597.2 434.3 L599.2 433.2 L601.2 433.4 L603.2 432.9 L605.2 434.3 L607.2 433.7 L609.2 434.4 L611.2 434.4 L613.2 434.4 L615.2 433.7 L617.2 434.1 L619.2 434.1 L621.2 434.3 L623.2 434.4 L625.2 434.3 L627.2 435.1 L629.2 434.3 L631.2 434.9 L633.2 433.8 L635.2 435.5 L637.2 435.1 L639.2 434.8 L641.2 434.7 L643.2 435.2 L645.2 433.7 L647.2 435.2 L649.2 434.5 L651.2 435.3 L653.2 435.3 L655.2 433.8 L657.2 434.7 L659.2 435.0 L661.2 433.3 L663.2 434.3 L665.2 433.8 L667.2 433.2 L669.2 434.1 L671.2 434.4 L673.2 433.3 L675.2 433.1 L677.2 433.0 L679.2 434.1 L681.2 432.9 L683.2 434.1 L685.2 434.1 L687.2 434.7 L689.2 434.0 L691.2 435.1 L693.2 433.5 L695.2 433.4 L697.2 432.7 L699.2 433.9 L701.2 433.6 L703.2 433.5 L705.2 432.5 L707.2 433.7 L709.2 433.5 L711.2 433.4 L713.2 433.1 L715.2 433.7 L717.2 433.5 L719.2 433.9 L721.2 434.5 L723.2 434.9 L725.2 434.6 L727.2 435.0 L729.2 434.8 L731.2 434.3 L733.2 434.1 L735.2 434.3 L737.2 434.5 L739.2 434.5 L741.2 435.0 L743.2 434.7 L745.2 434.6 L747.2 435.4 L749.2 435.1 L751.2 434.6 L753.2 433.8 L755.2 434.3 L757.2 435.8 L759.2 434.7 L761.2 435.1 L763.2 434.4 L765.2 435.6 L767.2 434.1 L769.2 435.1 L771.2 434.6 L773.2 434.0 L775.2 434.2 L777.2 433.6 L779.2 433.8 L781.2 433.2 L783.2 433.9 L785.2 433.9 L787.2 432.8 L789.2 432.3 L791.2 433.4 L793.2 432.4 L795.2 433.4 L797.2 433.4 L799.2 433.6 L801.2 433.4 L803.2 434.0 L805.2 432.9 L807.2 433.7 L809.2 434.3 L811.2 434.2 L813.2 435.0 L815.2 434.1 L817.2 432.9 L819.2 433.7 L821.2 432.7 L823.2 434.8 L825.2 434.0 L827.2 433.1" fill="none" stroke="#8a1fe2" stroke-width="2.8"/>
<path d="M833.2 433.8 L835.2 433.6 L837.2 433.2 L839.2 433.8 L841.2 434.5 L843.2 434.3 L845.2 433.6 L847.2 433.8 L849.2 433.7" fill="none" stroke="#8a1fe2" stroke-width="2.8"/>
<path d="M45.2 428.5 L47.2 428.1 L49.2 428.3 L51.2 428.4 L53.2 427.8 L55.2 428.1 L57.2 428.6 L59.2 427.7 L61.2 428.1 L63.2 428.0 L65.2 427.6 L67.2 427.9 L69.2 428.4 L71.2 427.6 L73.2 427.6 L75.2 428.5 L77.2 428.5 L79.2 427.6 L81.2 427.6 L83.2 427.4 L85.2 427.7 L87.2 428.2 L89.2 427.7 L91.2 427.4 L93.2 428.2 L95.2 428.0 L97.2 427.8 L99.2 427.5 L101.2 427.9 L103.2 427.8 L105.2 427.7 L107.2 428.2 L109.2 427.4 L111.2 428.3 L113.2 427.1 L115.2 428.2 L117.2 428.4 L119.2 428.5 L121.2 428.4 L123.2 427.6 L125.2 428.0 L127.2 427.9 L129.2 428.2 L131.2 428.4 L133.2 428.4 L135.2 427.8 L137.2 428.1 L139.2 428.2 L141.2 428.0 L143.2 427.3 L145.2 428.2 L147.2 427.6 L149.2 427.7 L151.2 428.3 L153.2 427.3 L155.2 427.2 L157.2 427.8 L159.2 428.1 L161.2 427.5 L163.2 427.3 L165.2 427.3 L167.2 427.6 L169.2 427.5 L171.2 427.5 L173.2 428.2 L175.2 428.4 L177.2 427.7 L179.2 428.7 L181.2 428.0 L183.2 428.4 L185.2 428.6 L187.2 428.1 L189.2 427.7 L191.2 427.8 L193.2 428.2 L195.2 427.4 L197.2 428.4 L199.2 427.6 L201.2 428.2 L203.2 427.3 L205.2 428.5 L207.2 428.1 L209.2 428.3 L211.2 427.5 L213.2 428.2 L215.2 427.9 L217.2 427.9 L219.2 427.4 L221.2 427.3 L223.2 428.2 L225.2 428.1 L227.2 427.3 L229.2 428.2 L231.2 427.6 L233.2 428.8 L235.2 428.5 L237.2 427.7 L239.2 427.4 L241.2 428.0 L243.2 427.4 L245.2 428.4 L247.2 427.9 L249.2 428.1 L251.2 428.6 L253.2 428.3 L255.2 428.3 L257.2 428.0 L259.2 427.4 L261.2 427.8 L263.2 427.9 L265.2 427.4 L267.2 428.2 L269.2 428.4 L271.2 427.5 L273.2 428.4 L275.2 428.5 L277.2 428.1 L279.2 427.3 L281.2 428.1 L283.2 427.5 L285.2 427.5 L287.2 428.2 L289.2 427.8 L291.2 427.7 L293.2 428.3 L295.2 427.9 L297.2 427.1 L299.2 428.1 L301.2 427.8 L303.2 428.0 L305.2 427.3 L307.2 427.2 L309.2 427.7 L311.2 427.8 L313.2 428.1 L315.2 427.4 L317.2 428.4 L319.2 428.0 L321.2 427.5 L323.2 427.3 L325.2 428.5 L327.2 428.2 L329.2 428.1 L331.2 428.2 L333.2 427.8 L335.2 427.5 L337.2 428.3 L339.2 428.0 L341.2 427.9 L343.2 428.0 L345.2 428.1 L347.2 427.5 L349.2 428.1 L351.2 427.4 L353.2 428.3 L355.2 427.6 L357.2 428.1 L359.2 427.3 L361.2 427.1 L363.2 428.1 L365.2 428.4 L367.2 427.7 L369.2 427.8 L371.2 427.6 L373.2 427.3 L375.2 428.0 L377.2 427.4 L379.2 427.9 L381.2 428.3 L383.2 427.9 L385.2 428.3 L387.2 428.3 L389.2 428.4 L391.2 428.4 L393.2 427.9 L395.2 428.6 L397.2 428.1 L399.2 428.5 L401.2 427.9 L403.2 428.4 L405.2 427.6 L407.2 428.1 L409.2 428.3 L411.2 427.4 L413.2 428.4 L415.2 428.3 L417.2 427.7 L419.2 427.8 L421.2 427.7 L423.2 428.5 L425.2 428.2 L427.2 427.7 L429.2 428.2 L431.2 428.3 L433.2 428.6 L435.2 427.8 L437.2 428.4 L439.2 427.6 L441.2 428.7 L443.2 427.5 L445.2 428.6 L447.2 428.0 L449.2 427.5 L451.2 428.0 L453.2 427.9 L455.2 427.2 L457.2 427.9 L459.2 427.8 L461.2 427.9 L463.2 428.2 L465.2 427.3 L467.2 427.9 L469.2 428.5 L471.2 428.2 L473.2 427.7 L475.2 428.0 L477.2 427.7 L479.2 427.6 L481.2 427.9 L483.2 427.9 L485.2 428.4 L487.2 427.6 L489.2 428.3 L491.2 428.4 L493.2 428.2 L495.2 428.3 L497.2 428.7 L499.2 428.6 L501.2 427.6 L503.2 428.5 L505.2 428.1 L507.2 428.2 L509.2 427.0 L511.2 427.2 L513.2 427.2 L515.2 427.2 L517.2 428.0 L519.2 427.0 L521.2 428.0 L523.2 428.1 L525.2 427.8 L527.2 427.9 L529.2 427.1 L531.2 428.0 L533.2 428.0 L535.2 428.3 L537.2 427.6 L539.2 427.5 L541.2 427.8 L543.2 428.2 L545.2 428.3 L547.2 427.9 L549.2 427.5 L551.2 427.5 L553.2 428.1 L555.2 428.1 L557.2 427.6 L559.2 427.4 L561.2 428.2 L563.2 428.3 L565.2 427.9 L567.2 427.0 L569.2 427.4 L571.2 428.3 L573.2 428.4 L575.2 428.0 L577.2 427.4 L579.2 428.4 L581.2 428.5 L583.2 428.3 L585.2 428.5 L587.2 428.2 L589.2 428.6 L591.2 428.2 L593.2 427.7 L595.2 428.7 L597.2 428.2 L599.2 427.8 L601.2 428.5 L603.2 428.2 L605.2 428.4 L607.2 428.2 L609.2 427.6 L611.2 427.5 L613.2 428.2 L615.2 428.5 L617.2 428.0 L619.2 428.4 L621.2 428.6 L623.2 428.1 L625.2 428.0 L627.2 428.4 L629.2 428.3 L631.2 427.8 L633.2 427.8 L635.2 427.8 L637.2 428.2 L639.2 428.0 L641.2 428.6 L643.2 428.7 L645.2 427.9 L647.2 427.7 L649.2 428.2 L651.2 428.0 L653.2 427.8 L655.2 427.8 L657.2 428.1 L659.2 428.2 L661.2 428.1 L663.2 427.1 L665.2 427.8 L667.2 427.7 L669.2 427.2 L671.2 427.4 L673.2 427.0 L675.2 427.3 L677.2 427.2 L679.2 427.4 L681.2 427.9 L683.2 427.7 L685.2 427.5 L687.2 428.7 L689.2 427.8 L691.2 428.7 L693.2 429.0 L695.2 428.1 L697.2 427.8 L699.2 428.2 L701.2 427.9 L703.2 427.6 L705.2 427.8 L707.2 427.5 L709.2 428.5 L711.2 428.8 L713.2 427.7 L715.2 427.6 L717.2 428.2 L719.2 428.6 L721.2 428.3 L723.2 428.1 L725.2 428.5 L727.2 428.0 L729.2 428.5 L731.2 428.0 L733.2 427.7 L735.2 428.2 L737.2 427.7 L739.2 427.9 L741.2 428.4 L743.2 428.4 L745.2 428.2 L747.2 428.3 L749.2 427.3 L751.2 428.1 L753.2 427.7 L755.2 428.2 L757.2 427.8 L759.2 427.7 L761.2 428.6 L763.2 428.1 L765.2 428.1 L767.2 428.0 L769.2 427.9 L771.2 428.3 L773.2 428.3 L775.2 428.4 L777.2 428.4 L779.2 428.2 L781.2 427.8 L783.2 427.4 L785.2 428.0 L787.2 427.6 L789.2 427.6 L791.2 428.1 L793.2 427.6 L795.2 427.7 L797.2 428.2 L799.2 427.9 L801.2 428.1 L803.2 428.2 L805.2 428.3 L807.2 427.5 L809.2 428.5 L811.2 428.4 L813.2 428.5 L815.2 428.5 L817.2 427.6 L819.2 427.5 L821.2 428.4 L823.2 427.6 L825.2 427.9 L827.2 427.8" fill="none" stroke="#e49126" stroke-width="2.4"/>
<path d="M833.2 427.8 L835.2 428.0 L837.2 428.0 L839.2 428.0 L841.2 427.8 L843.2 428.0 L845.2 427.6 L847.2 428.3 L849.2 427.4" fill="none" stroke="#e49126" stroke-width="2.4"/>
<path d="M45.2 418.8 L48.2 418.8 L51.2 418.5 L54.2 418.6 L57.2 418.8 L60.2 419.2 L63.2 418.6 L66.2 419.2 L69.2 418.5 L72.2 418.8 L75.2 418.9 L78.2 418.5 L81.2 418.8 L84.2 418.3 L87.2 418.6 L90.2 418.7 L93.2 418.9 L96.2 418.9 L99.2 418.7 L102.2 418.6 L105.2 418.8 L108.2 418.3 L111.2 418.5 L114.2 418.2 L117.2 418.6 L120.2 418.6 L123.2 418.1 L126.2 418.5 L129.2 418.5 L132.2 418.5 L135.2 418.5 L138.2 418.2 L141.2 418.3 L144.2 417.8 L147.2 418.1 L150.2 418.3 L153.2 418.0 L156.2 418.4 L159.2 418.2 L162.2 418.6 L165.2 419.0 L168.2 418.6 L171.2 419.1 L174.2 418.6 L177.2 419.0 L180.2 418.6 L183.2 418.4 L186.2 418.8 L189.2 418.4 L192.2 418.8 L195.2 418.9 L198.2 418.7 L201.2 418.8 L204.2 418.9 L207.2 418.8 L210.2 418.4 L213.2 418.4 L216.2 418.8 L219.2 418.1 L222.2 417.9 L225.2 418.3 L228.2 418.3 L231.2 419.0 L234.2 419.0 L237.2 419.1 L240.2 419.2 L243.2 419.1 L246.2 418.8 L249.2 419.2 L252.2 419.1 L255.2 419.3 L258.2 418.3 L261.2 418.7 L264.2 419.1 L267.2 419.0 L270.2 418.9 L273.2 418.4 L276.2 419.0 L279.2 419.1 L282.2 418.2 L285.2 418.3 L288.2 418.7 L291.2 418.4 L294.2 418.4 L297.2 418.9 L300.2 418.1 L303.2 418.1 L306.2 418.0 L309.2 418.4 L312.2 418.8 L315.2 418.8 L318.2 418.5 L321.2 418.5 L324.2 417.9 L327.2 418.2 L330.2 418.5 L333.2 418.7 L336.2 418.1 L339.2 418.3 L342.2 418.0 L345.2 418.3 L348.2 418.0 L351.2 418.2 L354.2 418.1 L357.2 418.2 L360.2 418.3 L363.2 418.0 L366.2 418.5 L369.2 418.7 L372.2 418.0 L375.2 418.2 L378.2 418.1 L381.2 418.3 L384.2 418.9 L387.2 418.2 L390.2 418.0 L393.2 418.1 L396.2 418.5 L399.2 418.5 L402.2 418.4 L405.2 418.6 L408.2 418.4 L411.2 418.8 L414.2 418.3 L417.2 418.3 L420.2 418.6 L423.2 419.0 L426.2 418.8 L429.2 418.5 L432.2 418.9 L435.2 418.6 L438.2 418.7 L441.2 418.4 L444.2 418.7 L447.2 419.0 L450.2 418.7 L453.2 418.4 L456.2 418.5 L459.2 418.4 L462.2 418.2 L465.2 418.4 L468.2 418.1 L471.2 418.0 L474.2 418.4 L477.2 417.8 L480.2 418.4 L483.2 418.3 L486.2 418.7 L489.2 418.5 L492.2 418.2 L495.2 418.5 L498.2 418.8 L501.2 418.0 L504.2 418.1 L507.2 418.5 L510.2 418.1 L513.2 418.5 L516.2 418.6 L519.2 418.7 L522.2 418.9 L525.2 418.5 L528.2 418.8 L531.2 418.5 L534.2 418.3 L537.2 418.2 L540.2 418.9 L543.2 418.6 L546.2 419.2 L549.2 418.5 L552.2 418.9 L555.2 418.4 L558.2 418.5 L561.2 419.2 L564.2 418.7 L567.2 418.5 L570.2 418.5 L573.2 418.5 L576.2 418.7 L579.2 419.0 L582.2 418.5 L585.2 419.1 L588.2 419.0 L591.2 419.2 L594.2 419.2 L597.2 419.1 L600.2 419.0 L603.2 419.0 L606.2 419.2 L609.2 419.2 L612.2 418.6 L615.2 418.8 L618.2 418.9 L621.2 418.4 L624.2 418.1 L627.2 418.4 L630.2 418.0 L633.2 418.2 L636.2 418.3 L639.2 418.5 L642.2 418.9 L645.2 418.6 L648.2 419.1 L651.2 418.6 L654.2 418.6 L657.2 419.0 L660.2 418.8 L663.2 418.9 L666.2 418.5 L669.2 418.6 L672.2 418.3 L675.2 418.9 L678.2 419.0 L681.2 418.8 L684.2 418.9 L687.2 419.2 L690.2 419.2 L693.2 419.6 L696.2 419.4 L699.2 419.0 L702.2 418.7 L705.2 418.4 L708.2 418.8 L711.2 418.7 L714.2 418.3 L717.2 418.3 L720.2 418.3 L723.2 418.0 L726.2 418.4 L729.2 418.2 L732.2 418.1 L735.2 418.0 L738.2 418.1 L741.2 418.8 L744.2 418.7 L747.2 418.4 L750.2 418.5 L753.2 418.4 L756.2 418.9 L759.2 418.2 L762.2 418.4 L765.2 418.7 L768.2 418.5 L771.2 418.7 L774.2 418.6 L777.2 417.9 L780.2 418.4 L783.2 418.2 L786.2 418.2 L789.2 418.6 L792.2 418.6 L795.2 418.5 L798.2 418.7 L801.2 418.7 L804.2 418.3 L807.2 418.5 L810.2 418.4 L813.2 418.7 L816.2 418.5 L819.2 417.7 L822.2 418.4 L825.2 417.8 L828.2 418.5 L829.0 418.5 L829.0 601.0 L832.0 601.0 L832.0 418.5 L834.2 418.5 L837.2 418.6 L840.2 418.7 L843.2 418.3 L846.2 418.0 L849.2 418.0" fill="none" stroke="#bf72ee" stroke-width="2.2" stroke-linejoin="miter"/>
</svg>    <div class="t xl" style="left:70px">15:06</div>
    <div class="t xl" style="left:150px">15:08</div>
    <div class="t xl" style="left:230px">15:10</div>
    <div class="t xl" style="left:310px">15:12</div>
    <div class="t xl" style="left:391px">15:14</div>
    <div class="t xl" style="left:472px">15:16</div>
    <div class="t xl" style="left:552px">15:18</div>
    <div class="t xl" style="left:632px">15:20</div>
    <div class="t xl" style="left:713px">15:22</div>
    <div class="t xl" style="left:793px">15:24</div>
  </div>
  <svg class="a" style="left:1519px;top:711px" width="205" height="17"><path d="M0 0H204L190 16H12Z" fill="#1e2a31" opacity="0.8"/></svg>
  <!-- P5 console -->
  <div class="panel" style="left:989px;top:727px;width:868px;height:320px">
    <div class="ph"></div>
    <svg class="a" style="left:16px;top:10px" width="24" height="24" viewBox="0 0 24 24"><path d="M20,19V7H4V19H20M20,3A2,2 0 0,1 22,5V19A2,2 0 0,1 20,21H4A2,2 0 0,1 2,19V5C2,3.89 2.9,3 4,3H20M13,17V15H18V17H13M9.58,13L5.57,9H8.4L11.7,12.3C12.09,12.69 12.09,13.33 11.7,13.72L8.42,17H5.59L9.58,13Z" fill="#e6e6e6"/></svg>
    <div class="t" style="left:44px;top:10px;font-size:18.5px;line-height:22px;color:#dcdcdc;letter-spacing:0.1px">Console</div>
    <svg class="a" style="left:117px;top:14px" width="16" height="16" viewBox="0 0 24 24"><circle cx="12" cy="12" r="10" fill="#2196f3"/><path d="M9 9.2A3 3 0 0 1 15 9.2C15 11 12.2 11.5 12.2 13.8" fill="none" stroke="#28282b" stroke-width="2.2"/><circle cx="12.2" cy="17.3" r="1.3" fill="#28282b"/></svg>
    <svg class="a" style="left:716px;top:11px" width="20" height="20" viewBox="0 0 24 24"><path d="M5,5H10V7H7V10H5V5M14,5H19V10H17V7H14V5M17,14H19V19H14V17H17V14M10,17V19H5V14H7V17H10Z" fill="#e0e0e0"/></svg>
    <svg class="a" style="left:751px;top:9px" width="22" height="22" viewBox="0 0 24 24"><path d="M19,4H15.5L14.5,3H9.5L8.5,4H5V6H19M6,19A2,2 0 0,0 8,21H16A2,2 0 0,0 18,19V7H6V19Z" fill="#e0e0e0"/></svg>
    <svg class="a" style="left:787px;top:10px" width="22" height="22" viewBox="0 0 24 24"><path d="M12,15.5A3.5,3.5 0 0,1 8.5,12A3.5,3.5 0 0,1 12,8.5A3.5,3.5 0 0,1 15.5,12A3.5,3.5 0 0,1 12,15.5M19.43,12.97C19.47,12.65 19.5,12.33 19.5,12C19.5,11.67 19.47,11.34 19.43,11L21.54,9.37C21.73,9.22 21.78,8.95 21.66,8.73L19.66,5.27C19.54,5.05 19.27,4.96 19.05,5.05L16.56,6.05C16.04,5.66 15.5,5.32 14.87,5.07L14.5,2.42C14.46,2.18 14.25,2 14,2H10C9.75,2 9.54,2.18 9.5,2.42L9.13,5.07C8.5,5.32 7.96,5.66 7.44,6.05L4.95,5.05C4.73,4.96 4.46,5.05 4.34,5.27L2.34,8.73C2.21,8.95 2.27,9.22 2.46,9.37L4.57,11C4.53,11.34 4.5,11.67 4.5,12C4.5,12.33 4.53,12.65 4.57,12.97L2.46,14.63C2.27,14.78 2.21,15.05 2.34,15.27L4.34,18.73C4.46,18.95 4.73,19.03 4.95,18.95L7.44,17.94C7.96,18.34 8.5,18.68 9.13,18.93L9.5,21.58C9.54,21.82 9.75,22 10,22H14C14.25,22 14.46,21.82 14.5,21.58L14.87,18.93C15.5,18.67 16.04,18.34 16.56,17.94L19.05,18.95C19.27,19.03 19.54,18.95 19.66,18.73L21.66,15.27C21.78,15.05 21.73,14.78 21.54,14.63L19.43,12.97Z" fill="#e0e0e0"/></svg>
    <svg class="a" style="left:822px;top:9px" width="24" height="24" viewBox="0 0 24 24"><path d="M7.41,15.41L12,10.83L16.59,15.41L18,14L12,8L6,14L7.41,15.41Z" fill="#e0e0e0"/></svg>
    <div class="t cl" style="top:44px">15:24:37  <span style="margin-left:5px">// Klipper state: Shutdown</span></div>
    <div class="t cl" style="top:68px">15:24:38  <span style="margin-left:5px;color:#3b9ae6">$ FIRMWARE_RESTART</span></div>
    <div class="t cl" style="top:92px">15:24:38  <span style="margin-left:5px">// Klipper state: Disconnect</span></div>
  </div>

</div>

<!-- scrollbar -->
<div id="sb" class="a"></div>
<svg class="a" style="left:1907px;top:91px" width="10" height="8"><path d="M1 7 L5 2 L9 7Z" fill="#8a8a8a"/></svg>
<div class="a" style="left:1908px;top:105px;width:9px;height:347px;border-radius:5px;background:#8f8f8f"></div>
<svg class="a" style="left:1907px;top:1020px" width="10" height="8"><path d="M1 1 L5 6 L9 1Z" fill="#8a8a8a"/></svg>

<!-- red highlight -->
<div class="a" style="left:117px;top:37px;width:572px;height:56px;border:6px solid #ef3a3a;border-radius:6px"></div>
</body></html>
